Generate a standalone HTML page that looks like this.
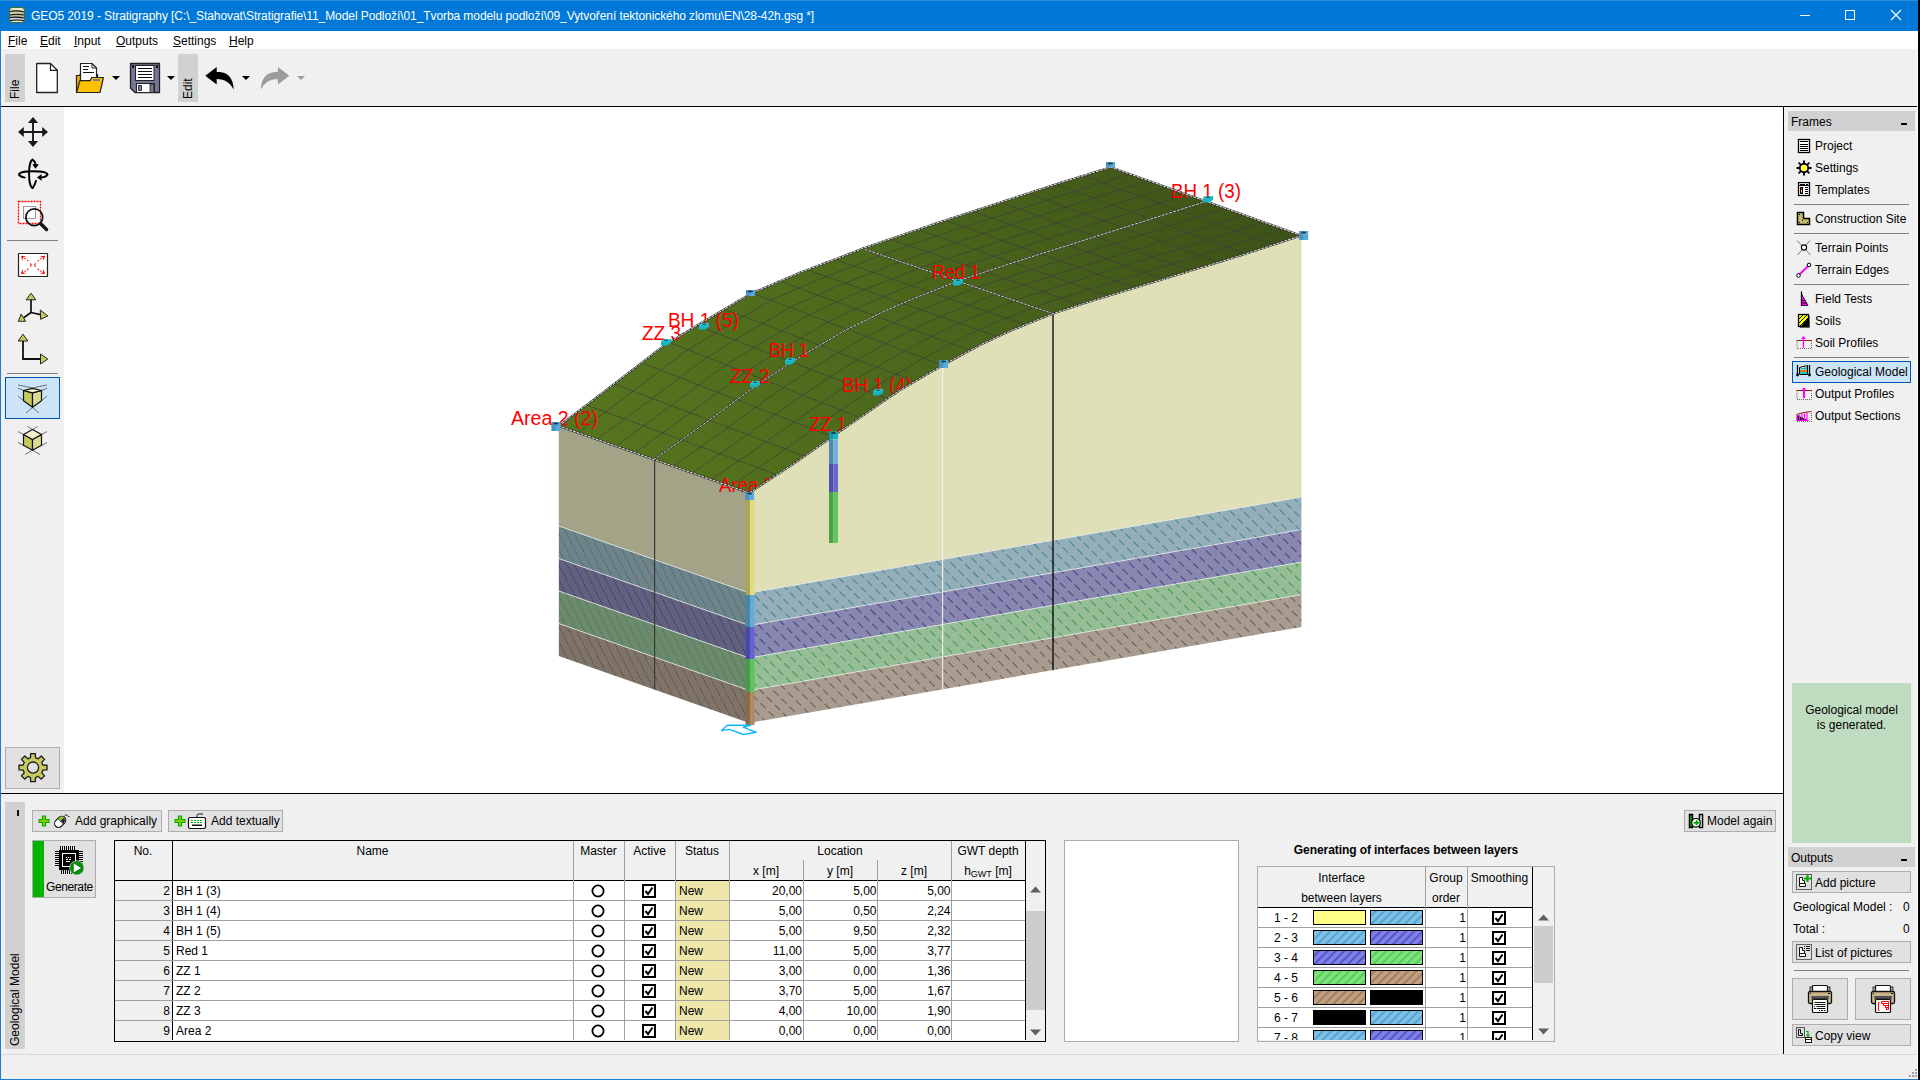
<!DOCTYPE html>
<html><head><meta charset="utf-8"><title>GEO5</title><style>
*{margin:0;padding:0}
html,body{width:1920px;height:1080px;overflow:hidden;background:#f0f0f0;position:relative}
body{font-family:"Liberation Sans",sans-serif;font-size:12px;color:#000}
.t{position:absolute;white-space:pre;line-height:15px;font-size:12px;margin-top:1px}
u{text-decoration:underline;text-underline-offset:1px}
</style></head>
<body>
<div style="position:absolute;left:0px;top:0px;width:1918px;height:31px;background:#0078d7"></div>
<div style="position:absolute;left:0px;top:0px;width:1918px;height:1px;background:#2b8ddd"></div>
<div style="position:absolute;left:1918px;top:0px;width:2px;height:1080px;background:#000"></div>
<div style="position:absolute;left:0px;top:31px;width:1px;height:1049px;background:#1a7fd4"></div>
<div style="position:absolute;left:0px;top:1079px;width:1918px;height:1px;background:#1a7fd4"></div>
<div style="position:absolute;left:9px;top:7px;width:16px;height:16px;"><svg width="16" height="16" viewBox="0 0 16 16"><defs><linearGradient id="tg" x1="0" y1="0" x2="0" y2="1"><stop offset="0" stop-color="#f0f0d8"/><stop offset=".45" stop-color="#c8c890"/><stop offset=".55" stop-color="#b0b0b0"/><stop offset="1" stop-color="#e8e8e8"/></linearGradient></defs><rect x=".5" y=".5" width="15" height="15" rx="3" fill="url(#tg)" stroke="#4a6a20"/><path d="M1 4.5 Q8 3 15 5 M1 8 Q8 6.5 15 8 M1 10.5 Q8 9.5 15 11 M1 13.5 Q8 12.5 15 13.5" stroke="#111" stroke-width="1.1" fill="none"/></svg></div>
<div class="t" style="left:31px;top:8px;color:#fff;letter-spacing:-0.08px">GEO5 2019 - Stratigraphy [C:\_Stahovat\Stratigrafie\11_Model Podloží\01_Tvorba modelu podloží\09_Vytvoření tektonického zlomu\EN\28-42h.gsg *]</div>
<div style="position:absolute;left:1800px;top:15px;width:10px;height:1px;background:#fff"></div>
<div style="position:absolute;left:1845px;top:10px;width:10px;height:10px;border:1px solid #fff;box-sizing:border-box"></div>
<div style="position:absolute;left:1890px;top:9px;width:12px;height:12px;"><svg width="12" height="12"><path d="M1 1L11 11M11 1L1 11" stroke="#fff" stroke-width="1.1"/></svg></div>
<div style="position:absolute;left:1px;top:31px;width:1917px;height:18px;background:#fff"></div>
<div class="t" style="left:8px;top:33px;color:#000"><u>F</u>ile</div>
<div class="t" style="left:40px;top:33px;color:#000"><u>E</u>dit</div>
<div class="t" style="left:74px;top:33px;color:#000"><u>I</u>nput</div>
<div class="t" style="left:116px;top:33px;color:#000"><u>O</u>utputs</div>
<div class="t" style="left:173px;top:33px;color:#000"><u>S</u>ettings</div>
<div class="t" style="left:229px;top:33px;color:#000"><u>H</u>elp</div>
<div style="position:absolute;left:1px;top:49px;width:1917px;height:57px;background:#f0f0f0"></div>
<div style="position:absolute;left:1px;top:106px;width:1917px;height:1px;background:#000"></div>
<div style="position:absolute;left:5px;top:54px;width:20px;height:48px;background:#d1d1d1"></div><div class="t" style="left:8px;top:98px;transform-origin:0 0;transform:rotate(-90deg);color:#000">File</div>
<div style="position:absolute;left:178px;top:54px;width:20px;height:48px;background:#d1d1d1"></div><div class="t" style="left:181px;top:98px;transform-origin:0 0;transform:rotate(-90deg);color:#000">Edit</div>
<svg style="position:absolute;left:30px;top:58px;" width="40" height="40" viewBox="0 0 40 40"><path d="M6.7 5.5H20.5L27.3 12.3V34.5H6.7Z" fill="#fff" stroke="#222" stroke-width="1.3" stroke-linejoin="round"/><path d="M20.5 5.5V12.3H27.3" fill="none" stroke="#222" stroke-width="1.2"/></svg>
<svg style="position:absolute;left:70px;top:58px;" width="40" height="40" viewBox="0 0 40 40"><path d="M6.5 17.5H10V16.5H27.5V34.5H6.5Z" fill="#f0ac00" stroke="#222" stroke-width="1.2"/><path d="M10.5 5.5H22L26.5 10V22.5H10.5Z" fill="#fff" stroke="#222" stroke-width="1.2" stroke-linejoin="round"/><path d="M22 5.5V10H26.5" fill="none" stroke="#222"/><path d="M13 8.5H19M13 11.5H18M13 14.5H24" stroke="#111" stroke-width="1.1"/><path d="M6.5 34.5L10 22.7H20.2L21.7 19.5H33.4L30 34.5Z" fill="#ffc000" stroke="#222" stroke-width="1.2" stroke-linejoin="round"/><rect x="23" y="21" width="7" height="2" fill="#7878a0"/></svg>
<svg style="position:absolute;left:112px;top:76px;" width="9" height="5" viewBox="0 0 9 5"><path d="M0 0H8L4 4Z" fill="#000"/></svg>
<svg style="position:absolute;left:128px;top:58px;" width="36" height="40" viewBox="0 0 36 40"><path d="M2.5 5.5H31.5V34.5H7L2.5 30Z" fill="#767696" stroke="#222" stroke-width="1.3" stroke-linejoin="round"/><rect x="7.5" y="7.5" width="18.5" height="15" fill="#fff" stroke="#222"/><path d="M10 10.5H24M10 13.5H24M10 16.5H24M10 19.5H24" stroke="#111" stroke-width="1.1"/><rect x="8.5" y="25.5" width="18" height="9" fill="#fff" stroke="#222"/><rect x="22" y="26" width="4" height="8.5" fill="#767696" stroke="#222" stroke-width=".8"/><rect x="10.5" y="27.5" width="3" height="5" fill="#767696" stroke="#222" stroke-width=".8"/><rect x="4" y="7" width="2" height="3" fill="#111"/><rect x="28" y="7" width="2" height="3" fill="#111"/></svg>
<svg style="position:absolute;left:167px;top:76px;" width="9" height="5" viewBox="0 0 9 5"><path d="M0 0H8L4 4Z" fill="#000"/></svg>
<svg style="position:absolute;left:198px;top:60px;" width="100" height="36" viewBox="0 0 100 36"><path d="M7.3 15.75L18.7 7V12C26 11.5 35 14 35.8 29.5C32 23 27 19 18.7 19V24.5Z" fill="#000"/><path d="M91.3 15.75L79.9 7V12C72.6 11.5 63.6 14 62.8 29.5C66.6 23 71.6 19 79.9 19V24.5Z" fill="#9c9c9c"/></svg>
<svg style="position:absolute;left:242px;top:76px;" width="9" height="5" viewBox="0 0 9 5"><path d="M0 0H8L4 4Z" fill="#000"/></svg>
<svg style="position:absolute;left:297px;top:76px;" width="9" height="5" viewBox="0 0 9 5"><path d="M0 0H8L4 4Z" fill="#9c9c9c"/></svg>
<div style="position:absolute;left:1px;top:107px;width:63px;height:686px;background:#f0f0f0"></div>
<svg style="position:absolute;left:14px;top:113px;" width="38" height="38" viewBox="0 0 38 38"><path d="M19 9V29M9 19H29" stroke="#1a1a1a" stroke-width="1.9"/><path d="M19 4L13.9 9.9H24.1Z M19 34L13.9 28.1H24.1Z M4 19L9.8 13.9V24.1Z M34 19L28.2 13.9V24.1Z" fill="#1a1a1a"/></svg>
<svg style="position:absolute;left:14px;top:155px;" width="38" height="38" viewBox="0 0 38 38"><g fill="none" stroke="#000" stroke-width="1.9" stroke-linecap="round"><path d="M18.5 4.6A3.8 14.3 0 0 0 18.5 33.1"/><path d="M18.5 4.6Q21 6 21.6 9.5"/><path d="M18.5 33.1Q21 30 22 25.8"/><path d="M5 19.5A14.2 3.3 0 0 1 33.4 19.5"/><path d="M33.4 19.5Q32 22.2 28 22.4"/><path d="M5 19.5Q6 21.8 10.8 22.6"/></g><path d="M18.2 9.3H24.9L21.5 13.8Z M23 22.4L27.6 19V25.8Z" fill="#000"/></svg>
<svg style="position:absolute;left:14px;top:197px;" width="38" height="38" viewBox="0 0 38 38"><rect x="4.5" y="4.5" width="22" height="22" fill="#fff" stroke="#f00" stroke-width="1.3" stroke-dasharray="2 1"/><rect x="9.5" y="9.5" width="12" height="12" fill="none" stroke="#999" stroke-width="1"/><circle cx="20.3" cy="20.2" r="8.4" fill="none" stroke="#111" stroke-width="1.7"/><path d="M26.5 26.5L32.5 32.5" stroke="#111" stroke-width="3.4" stroke-linecap="round"/></svg>
<div style="position:absolute;left:7px;top:240px;width:51px;height:1px;background:#808080"></div>
<svg style="position:absolute;left:14px;top:246px;" width="38" height="38" viewBox="0 0 38 38"><rect x="4.5" y="7.5" width="29" height="23" rx="0.6" fill="#fff" stroke="#222" stroke-width="1.2"/><path d="M7 9.8L12 10.2L9 11.6L8.4 14.8Z M31 9.8L26 10.2L29 11.6L29.6 14.8Z M7 28L12 27.6L9 26.2L8.4 23Z M31 28L26 27.6L29 26.2L29.6 23Z" fill="#f00"/><path d="M10.5 12.2L15.2 15.8M27.5 12.2L22.8 15.8M10.5 25.6L15.2 22.2M27.5 25.6L22.8 22.2" stroke="#f00" stroke-width="1.1" stroke-dasharray="1.6 1.6"/><path d="M16.4 17.4Q18 18.9 16.4 20.5M21.6 17.4Q20 18.9 21.6 20.5" fill="none" stroke="#f00" stroke-width="1.1"/></svg>
<svg style="position:absolute;left:14px;top:288px;" width="38" height="80" viewBox="0 0 38 80"><path d="M17 11V24.5L10 29.5M17 24.5L26.5 26.6" fill="none" stroke="#111" stroke-width="1.7"/><path d="M17 5.2L12.2 11.8H21.8Z M4.3 33.3H11.6L7.2 26Z M26.3 22L33.8 28L26.6 31.3Z" fill="#c8c860" stroke="#111" stroke-width=".9" stroke-linejoin="round"/><path d="M9 52V71H27" fill="none" stroke="#111" stroke-width="1.8"/><path d="M9 46.2L4.2 53H13.8Z M33.8 71L26.5 66V76Z" fill="#c8c860" stroke="#111" stroke-width=".9" stroke-linejoin="round"/></svg>
<div style="position:absolute;left:7px;top:373px;width:51px;height:1px;background:#808080"></div>
<div style="position:absolute;left:5px;top:377px;width:55px;height:42px;background:#cce4f7;border:1px solid #0055b0;box-sizing:border-box"></div>
<svg style="position:absolute;left:14px;top:380px;" width="38" height="76" viewBox="0 0 38 76"><g stroke="#606060" stroke-width=".9" fill="none"><path d="M4 5Q12 6.5 18.5 8Q25 6.5 33 5M4 8.3L9.5 10.3M33 8.3L27.5 10.3M4 16.2L9.5 20.5M33 16.2L27.5 20.5M12 33L18.5 27.5L25 33"/><path d="M13.5 46.5L18.5 49.5L23.5 46.5M4 51.5L9.5 54.5M33 51.5L27.5 54.5M4 62.5L9.5 65.5M33 62.5L27.5 65.5M11 74.5L18.5 70.2L26 74.5"/></g><g stroke="#111" stroke-width="1.2" stroke-linejoin="round"><path d="M9.5 10.5L18.5 12.8V27.3L9.5 20.8Z" fill="#c8c860"/><path d="M18.5 12.8L27.5 10.5V20.8L18.5 27.3Z" fill="#dcdc90"/><path d="M9.5 10.5L18.5 8.3L27.5 10.5L18.5 12.8Z" fill="#f2f2cc"/><path d="M9.5 54.5L18.5 59.5V70.2L9.5 65.2Z" fill="#c8c860"/><path d="M18.5 59.5L27.5 54.5V65.2L18.5 70.2Z" fill="#dcdc90"/><path d="M9.5 54.5L18.5 49.5L27.5 54.5L18.5 59.5Z" fill="#f2f2cc"/></g></svg>
<div style="position:absolute;left:5px;top:747px;width:55px;height:42px;background:#e1e1e1;border:1px solid #adadad;box-sizing:border-box"></div>
<svg style="position:absolute;left:18px;top:753px;" width="30" height="30" viewBox="0 0 30 30"><path d="M12.48 4.72 L12.67 0.59 L17.33 0.59 L17.52 4.72 L20.20 5.83 L23.26 3.05 L26.55 6.34 L23.77 9.40 L24.88 12.08 L29.01 12.27 L29.01 16.93 L24.88 17.12 L23.77 19.80 L26.55 22.86 L23.26 26.15 L20.20 23.37 L17.52 24.48 L17.33 28.61 L12.67 28.61 L12.48 24.48 L9.80 23.37 L6.74 26.15 L3.45 22.86 L6.23 19.80 L5.12 17.12 L0.99 16.93 L0.99 12.27 L5.12 12.08 L6.23 9.40 L3.45 6.34 L6.74 3.05 L9.80 5.83Z" fill="#c8c860" stroke="#1a1a1a" stroke-width="1.3" stroke-linejoin="round"/><circle cx="15" cy="14.6" r="5.6" fill="#e1e1e1" stroke="#1a1a1a" stroke-width="1.3"/></svg>
<div style="position:absolute;left:1px;top:793px;width:1782px;height:1px;background:#000"></div>
<div style="position:absolute;left:64px;top:107px;width:1719px;height:686px;background:#fff;overflow:hidden">
<svg width="1719" height="686" viewBox="64 107 1719 686" style="position:absolute;left:0;top:0" font-family="Liberation Sans, sans-serif">
<defs><linearGradient id="topg" gradientUnits="userSpaceOnUse" x1="600" y1="430" x2="1250" y2="190"><stop offset="0" stop-color="#56741e"/><stop offset="0.45" stop-color="#4c681c"/><stop offset="1" stop-color="#3e5318"/></linearGradient><pattern id="fhB" width="9" height="11.5" patternUnits="userSpaceOnUse" patternTransform="rotate(-45)"><rect width="9" height="11.5" fill="#94aeba"/><path d="M4.5 0V7.5" stroke="#2f7282" stroke-width="0.9" opacity="0.85"/></pattern><pattern id="lhB" width="7" height="2.5" patternUnits="userSpaceOnUse" patternTransform="rotate(-27)"><rect width="7" height="2.5" fill="#6f8489"/><rect x="3" y="0.75" width="1" height="1" fill="#1f5868" opacity="0.95"/></pattern><pattern id="fhP" width="9" height="11.5" patternUnits="userSpaceOnUse" patternTransform="rotate(-45)"><rect width="9" height="11.5" fill="#8787af"/><path d="M4.5 0V7.5" stroke="#2a2a7a" stroke-width="0.9" opacity="0.85"/></pattern><pattern id="lhP" width="7" height="2.5" patternUnits="userSpaceOnUse" patternTransform="rotate(-27)"><rect width="7" height="2.5" fill="#62627f"/><rect x="3" y="0.75" width="1" height="1" fill="#20206a" opacity="0.95"/></pattern><pattern id="fhG" width="9" height="11.5" patternUnits="userSpaceOnUse" patternTransform="rotate(-45)"><rect width="9" height="11.5" fill="#96be96"/><path d="M4.5 0V7.5" stroke="#2a8a3a" stroke-width="0.9" opacity="0.85"/></pattern><pattern id="lhG" width="7" height="2.5" patternUnits="userSpaceOnUse" patternTransform="rotate(-27)"><rect width="7" height="2.5" fill="#6d8a6f"/><rect x="3" y="0.75" width="1" height="1" fill="#1f7a2a" opacity="0.95"/></pattern><pattern id="fhR" width="9" height="11.5" patternUnits="userSpaceOnUse" patternTransform="rotate(-45)"><rect width="9" height="11.5" fill="#a89c90"/><path d="M4.5 0V7.5" stroke="#5a4630" stroke-width="0.9" opacity="0.85"/></pattern><pattern id="lhR" width="7" height="2.5" patternUnits="userSpaceOnUse" patternTransform="rotate(-27)"><rect width="7" height="2.5" fill="#7f746a"/><rect x="3" y="0.75" width="1" height="1" fill="#4a3620" opacity="0.95"/></pattern></defs>
<polygon points="749.4,493.0 752.2,491.2 754.9,489.3 757.7,487.5 760.4,485.7 763.2,483.9 766.0,482.0 768.7,480.2 771.5,478.4 774.2,476.5 777.0,474.7 779.8,472.9 782.5,471.1 785.3,469.2 788.0,467.4 790.8,465.6 793.6,463.7 796.3,461.9 799.1,460.1 801.8,458.2 804.6,456.2 807.4,454.3 810.1,452.4 812.9,450.4 815.6,448.5 818.4,446.5 821.2,444.6 823.9,442.6 826.7,440.7 829.4,438.7 832.2,436.8 835.0,434.8 837.7,432.9 840.5,431.0 843.2,429.1 846.0,427.2 848.8,425.3 851.5,423.4 854.3,421.5 857.0,419.6 859.8,417.7 862.6,415.8 865.3,413.9 868.1,412.0 870.8,410.1 873.6,408.2 876.4,406.3 879.1,404.4 881.9,402.5 884.6,400.6 887.4,398.6 890.2,396.7 892.9,394.9 895.7,393.1 898.4,391.3 901.2,389.5 904.0,387.9 906.7,386.3 909.5,384.7 912.2,383.1 915.0,381.5 917.8,379.9 920.5,378.2 923.3,376.6 926.0,375.0 928.8,373.4 931.6,371.8 934.3,370.2 937.1,368.6 939.8,367.0 942.6,365.3 945.4,363.8 948.1,362.3 950.9,360.8 953.6,359.3 956.4,357.8 959.2,356.3 961.9,354.8 964.7,353.3 967.4,351.9 970.2,350.4 973.0,348.9 975.7,347.4 978.5,345.9 981.2,344.4 984.0,343.1 986.8,341.9 989.5,340.6 992.3,339.3 995.0,338.0 997.8,336.7 1000.6,335.4 1003.3,334.1 1006.1,332.8 1008.8,331.6 1011.6,330.3 1014.4,329.2 1017.1,328.1 1019.9,327.0 1022.6,325.9 1025.4,324.8 1028.2,323.7 1030.9,322.6 1033.7,321.4 1036.4,320.3 1039.2,319.2 1042.0,318.1 1044.7,317.0 1047.5,315.9 1050.2,314.8 1053.0,313.7 1055.8,312.7 1058.5,311.8 1061.3,310.9 1064.0,310.0 1066.8,309.1 1069.6,308.2 1072.3,307.3 1075.1,306.4 1077.8,305.5 1080.6,304.6 1083.4,303.7 1086.1,302.8 1088.9,301.9 1091.6,301.1 1094.4,300.2 1097.2,299.4 1099.9,298.5 1102.7,297.7 1105.4,296.8 1108.2,296.0 1111.0,295.2 1113.7,294.3 1116.5,293.5 1119.2,292.6 1122.0,291.8 1124.8,290.9 1127.5,290.1 1130.3,289.3 1133.0,288.4 1135.8,287.6 1138.6,286.7 1141.3,285.9 1144.1,285.1 1146.8,284.2 1149.6,283.4 1152.4,282.5 1155.1,281.7 1157.9,280.8 1160.6,280.0 1163.4,279.2 1166.2,278.3 1168.9,277.5 1171.7,276.6 1174.4,275.8 1177.2,274.9 1180.0,274.1 1182.7,273.3 1185.5,272.4 1188.2,271.6 1191.0,270.7 1193.8,269.9 1196.5,269.0 1199.3,268.2 1202.0,267.4 1204.8,266.5 1207.6,265.7 1210.3,264.8 1213.1,264.0 1215.8,263.1 1218.6,262.3 1221.4,261.5 1224.1,260.6 1226.9,259.8 1229.6,258.9 1232.4,258.1 1235.2,257.2 1237.9,256.4 1240.7,255.5 1243.4,254.6 1246.2,253.7 1249.0,252.8 1251.7,251.9 1254.5,251.0 1257.2,250.1 1260.0,249.2 1262.8,248.3 1265.5,247.4 1268.3,246.5 1271.0,245.6 1273.8,244.7 1276.6,243.8 1279.3,242.8 1282.1,241.9 1284.8,241.0 1287.6,240.1 1290.4,239.2 1293.1,238.3 1295.9,237.4 1298.6,236.5 1301.4,235.6 1110.8,167.1 1108.0,167.9 1105.3,168.8 1102.5,169.7 1099.8,170.5 1097.0,171.4 1094.2,172.2 1091.5,173.1 1088.7,174.0 1086.0,174.8 1083.2,175.7 1080.4,176.5 1077.7,177.4 1074.9,178.2 1072.2,179.1 1069.4,180.0 1066.6,180.8 1063.9,181.7 1061.1,182.5 1058.4,183.4 1055.6,184.3 1052.8,185.2 1050.1,186.1 1047.3,187.0 1044.6,187.9 1041.8,188.8 1039.0,189.7 1036.3,190.6 1033.5,191.5 1030.8,192.4 1028.0,193.3 1025.2,194.2 1022.5,195.1 1019.7,196.0 1017.0,196.9 1014.2,197.8 1011.4,198.7 1008.7,199.6 1005.9,200.5 1003.2,201.4 1000.4,202.3 997.6,203.2 994.9,204.1 992.1,205.0 989.4,205.9 986.6,206.8 983.8,207.7 981.1,208.6 978.3,209.5 975.6,210.4 972.8,211.3 970.0,212.2 967.3,213.1 964.5,214.0 961.8,214.9 959.0,215.8 956.2,216.7 953.5,217.6 950.7,218.5 948.0,219.4 945.2,220.3 942.4,221.2 939.7,222.1 936.9,223.0 934.2,224.0 931.4,224.9 928.6,225.8 925.9,226.8 923.1,227.7 920.4,228.7 917.6,229.6 914.8,230.6 912.1,231.5 909.3,232.5 906.6,233.4 903.8,234.4 901.0,235.3 898.3,236.2 895.5,237.2 892.8,238.1 890.0,239.1 887.2,240.0 884.5,241.0 881.7,241.9 879.0,242.9 876.2,243.8 873.4,244.7 870.7,245.7 867.9,246.6 865.2,247.6 862.4,248.5 859.6,249.6 856.9,250.7 854.1,251.8 851.4,252.9 848.6,254.0 845.8,255.1 843.1,256.2 840.3,257.2 837.6,258.3 834.8,259.3 832.0,260.4 829.3,261.4 826.5,262.5 823.8,263.5 821.0,264.6 818.2,265.6 815.5,266.7 812.7,267.7 810.0,268.8 807.2,269.8 804.4,270.8 801.7,271.9 798.9,273.0 796.2,274.2 793.4,275.3 790.6,276.5 787.9,277.7 785.1,278.9 782.4,280.1 779.6,281.2 776.8,282.4 774.1,283.6 771.3,284.8 768.6,286.0 765.8,287.1 763.0,288.3 760.3,289.5 757.5,290.7 754.8,291.9 752.0,293.1 749.2,294.4 746.5,296.0 743.7,297.7 741.0,299.3 738.2,300.9 735.4,302.6 732.7,304.2 729.9,305.9 727.2,307.5 724.4,309.1 721.6,310.8 718.9,312.4 716.1,314.1 713.4,315.7 710.6,317.4 707.8,319.0 705.1,320.6 702.3,322.3 699.6,323.9 696.8,325.6 694.0,327.3 691.3,328.9 688.5,330.6 685.8,332.3 683.0,333.9 680.2,335.6 677.5,337.3 674.7,338.9 672.0,340.6 669.2,342.3 666.4,343.9 663.7,345.8 660.9,347.9 658.2,350.0 655.4,352.1 652.6,354.3 649.9,356.4 647.1,358.5 644.4,360.6 641.6,362.7 638.8,364.8 636.1,367.0 633.3,369.1 630.6,371.2 627.8,373.3 625.0,375.4 622.3,377.5 619.5,379.7 616.8,381.8 614.0,383.9 611.2,386.0 608.5,388.1 605.7,390.2 603.0,392.4 600.2,394.5 597.4,396.6 594.7,398.7 591.9,400.8 589.2,402.9 586.4,405.0 583.6,407.1 580.9,409.2 578.1,411.3 575.4,413.4 572.6,415.5 569.8,417.6 567.1,419.7 564.3,421.8 561.6,423.9 558.8,426.0" fill="url(#topg)"/>
<path d="M777.0 474.7 L772.2 473.0 L767.5 471.2 L762.7 469.5 L757.9 467.7 L753.2 466.0 L748.4 464.3 L743.6 462.5 L738.9 460.8 L734.1 459.0 L729.4 457.3 L724.6 455.5 L719.8 453.8 L715.1 452.1 L710.3 450.3 L705.5 448.6 L700.8 446.8 L696.0 445.1 L691.2 443.3 L686.5 441.6 L681.7 439.8 L676.9 438.1 L672.2 436.4 L667.4 434.6 L662.6 432.9 L657.9 431.1 L653.1 429.4 L648.3 427.6 L643.6 425.9 L638.8 424.2 L634.0 422.4 L629.3 420.7 L624.5 418.9 L619.8 417.2 L615.0 415.4 L610.2 413.7 L605.5 412.0 L600.7 410.2 L595.9 408.5 L591.2 406.7 L586.4 405.0 M804.6 456.2 L799.8 454.4 L795.1 452.6 L790.3 450.8 L785.5 449.0 L780.8 447.2 L776.0 445.4 L771.2 443.6 L766.5 441.8 L761.7 440.0 L757.0 438.2 L752.2 436.4 L747.4 434.5 L742.7 432.7 L737.9 430.9 L733.1 429.1 L728.4 427.3 L723.6 425.5 L718.8 423.7 L714.1 421.9 L709.3 420.1 L704.5 418.3 L699.8 416.5 L695.0 414.6 L690.2 412.8 L685.5 411.0 L680.7 409.2 L675.9 407.4 L671.2 405.6 L666.4 403.8 L661.7 402.0 L656.9 400.2 L652.1 398.4 L647.4 396.6 L642.6 394.7 L637.8 392.9 L633.1 391.1 L628.3 389.3 L623.5 387.5 L618.8 385.7 L614.0 383.9 M832.2 436.8 L827.4 434.9 L822.7 433.1 L817.9 431.2 L813.1 429.4 L808.4 427.5 L803.6 425.7 L798.8 423.8 L794.1 422.0 L789.3 420.1 L784.6 418.3 L779.8 416.4 L775.0 414.6 L770.3 412.7 L765.5 410.9 L760.7 409.0 L756.0 407.2 L751.2 405.3 L746.4 403.4 L741.7 401.6 L736.9 399.7 L732.1 397.9 L727.4 396.0 L722.6 394.2 L717.8 392.3 L713.1 390.5 L708.3 388.6 L703.5 386.8 L698.8 384.9 L694.0 383.1 L689.2 381.2 L684.5 379.4 L679.7 377.5 L675.0 375.7 L670.2 373.8 L665.4 372.0 L660.7 370.1 L655.9 368.3 L651.1 366.4 L646.4 364.6 L641.6 362.7 M859.8 417.7 L855.0 415.8 L850.3 413.9 L845.5 412.0 L840.7 410.2 L836.0 408.3 L831.2 406.4 L826.4 404.5 L821.7 402.6 L816.9 400.7 L812.1 398.8 L807.4 397.0 L802.6 395.1 L797.9 393.2 L793.1 391.3 L788.3 389.4 L783.6 387.5 L778.8 385.6 L774.0 383.8 L769.3 381.9 L764.5 380.0 L759.7 378.1 L755.0 376.2 L750.2 374.3 L745.4 372.4 L740.7 370.6 L735.9 368.7 L731.1 366.8 L726.4 364.9 L721.6 363.0 L716.8 361.1 L712.1 359.2 L707.3 357.4 L702.6 355.5 L697.8 353.6 L693.0 351.7 L688.3 349.8 L683.5 347.9 L678.7 346.0 L674.0 344.2 L669.2 342.3 M887.4 398.6 L882.6 396.8 L877.9 395.0 L873.1 393.2 L868.3 391.3 L863.6 389.5 L858.8 387.7 L854.0 385.9 L849.3 384.0 L844.5 382.2 L839.8 380.4 L835.0 378.6 L830.2 376.7 L825.5 374.9 L820.7 373.1 L815.9 371.3 L811.2 369.4 L806.4 367.6 L801.6 365.8 L796.9 363.9 L792.1 362.1 L787.3 360.3 L782.6 358.5 L777.8 356.6 L773.0 354.8 L768.3 353.0 L763.5 351.2 L758.7 349.3 L754.0 347.5 L749.2 345.7 L744.5 343.9 L739.7 342.0 L734.9 340.2 L730.2 338.4 L725.4 336.6 L720.6 334.7 L715.9 332.9 L711.1 331.1 L706.3 329.2 L701.6 327.4 L696.8 325.6 M915.0 381.5 L910.2 379.7 L905.5 377.9 L900.7 376.0 L895.9 374.2 L891.2 372.4 L886.4 370.6 L881.6 368.8 L876.9 367.0 L872.1 365.2 L867.4 363.4 L862.6 361.6 L857.8 359.8 L853.1 358.0 L848.3 356.2 L843.5 354.4 L838.8 352.5 L834.0 350.7 L829.2 348.9 L824.5 347.1 L819.7 345.3 L814.9 343.5 L810.2 341.7 L805.4 339.9 L800.6 338.1 L795.9 336.3 L791.1 334.5 L786.3 332.7 L781.6 330.8 L776.8 329.0 L772.0 327.2 L767.3 325.4 L762.5 323.6 L757.8 321.8 L753.0 320.0 L748.2 318.2 L743.5 316.4 L738.7 314.6 L733.9 312.8 L729.2 311.0 L724.4 309.1 M942.6 365.3 L937.8 363.5 L933.1 361.7 L928.3 359.9 L923.5 358.1 L918.8 356.3 L914.0 354.5 L909.2 352.7 L904.5 350.9 L899.7 349.1 L895.0 347.3 L890.2 345.5 L885.4 343.7 L880.7 341.8 L875.9 340.0 L871.1 338.2 L866.4 336.4 L861.6 334.6 L856.8 332.8 L852.1 331.0 L847.3 329.2 L842.5 327.4 L837.8 325.6 L833.0 323.8 L828.2 322.0 L823.5 320.2 L818.7 318.4 L813.9 316.5 L809.2 314.7 L804.4 312.9 L799.7 311.1 L794.9 309.3 L790.1 307.5 L785.4 305.7 L780.6 303.9 L775.8 302.1 L771.1 300.3 L766.3 298.5 L761.5 296.7 L756.8 294.9 L752.0 293.1 M970.2 350.4 L965.4 348.6 L960.7 346.9 L955.9 345.2 L951.1 343.4 L946.4 341.7 L941.6 340.0 L936.8 338.3 L932.1 336.5 L927.3 334.8 L922.6 333.1 L917.8 331.3 L913.0 329.6 L908.3 327.9 L903.5 326.2 L898.7 324.4 L894.0 322.7 L889.2 321.0 L884.4 319.3 L879.7 317.5 L874.9 315.8 L870.1 314.1 L865.4 312.3 L860.6 310.6 L855.8 308.9 L851.1 307.2 L846.3 305.4 L841.5 303.7 L836.8 302.0 L832.0 300.2 L827.2 298.5 L822.5 296.8 L817.7 295.1 L813.0 293.3 L808.2 291.6 L803.4 289.9 L798.7 288.2 L793.9 286.4 L789.1 284.7 L784.4 283.0 L779.6 281.2 M997.8 336.7 L993.0 335.0 L988.3 333.4 L983.5 331.7 L978.7 330.0 L974.0 328.3 L969.2 326.7 L964.4 325.0 L959.7 323.3 L954.9 321.7 L950.1 320.0 L945.4 318.3 L940.6 316.6 L935.9 315.0 L931.1 313.3 L926.3 311.6 L921.6 309.9 L916.8 308.3 L912.0 306.6 L907.3 304.9 L902.5 303.3 L897.7 301.6 L893.0 299.9 L888.2 298.2 L883.4 296.6 L878.7 294.9 L873.9 293.2 L869.1 291.5 L864.4 289.9 L859.6 288.2 L854.8 286.5 L850.1 284.9 L845.3 283.2 L840.6 281.5 L835.8 279.8 L831.0 278.2 L826.3 276.5 L821.5 274.8 L816.7 273.1 L812.0 271.5 L807.2 269.8 M1025.4 324.8 L1020.6 323.1 L1015.9 321.5 L1011.1 319.9 L1006.3 318.2 L1001.6 316.6 L996.8 315.0 L992.0 313.3 L987.3 311.7 L982.5 310.1 L977.8 308.4 L973.0 306.8 L968.2 305.2 L963.5 303.5 L958.7 301.9 L953.9 300.2 L949.2 298.6 L944.4 297.0 L939.6 295.3 L934.9 293.7 L930.1 292.1 L925.3 290.4 L920.6 288.8 L915.8 287.2 L911.0 285.5 L906.3 283.9 L901.5 282.3 L896.7 280.6 L892.0 279.0 L887.2 277.3 L882.5 275.7 L877.7 274.1 L872.9 272.4 L868.2 270.8 L863.4 269.2 L858.6 267.5 L853.9 265.9 L849.1 264.3 L844.3 262.6 L839.6 261.0 L834.8 259.3 M1080.6 304.6 L1075.8 303.0 L1071.1 301.3 L1066.3 299.7 L1061.5 298.1 L1056.8 296.4 L1052.0 294.8 L1047.2 293.1 L1042.5 291.5 L1037.7 289.9 L1032.9 288.2 L1028.2 286.6 L1023.4 285.0 L1018.7 283.3 L1013.9 281.7 L1009.1 280.0 L1004.4 278.4 L999.6 276.8 L994.8 275.1 L990.1 273.5 L985.3 271.8 L980.5 270.2 L975.8 268.6 L971.0 266.9 L966.2 265.3 L961.5 263.7 L956.7 262.0 L951.9 260.4 L947.2 258.7 L942.4 257.1 L937.6 255.5 L932.9 253.8 L928.1 252.2 L923.4 250.5 L918.6 248.9 L913.8 247.3 L909.1 245.6 L904.3 244.0 L899.5 242.4 L894.8 240.7 L890.0 239.1 M1108.2 296.0 L1103.4 294.3 L1098.7 292.7 L1093.9 291.0 L1089.1 289.4 L1084.4 287.7 L1079.6 286.0 L1074.8 284.4 L1070.1 282.7 L1065.3 281.1 L1060.5 279.4 L1055.8 277.8 L1051.0 276.1 L1046.3 274.4 L1041.5 272.8 L1036.7 271.1 L1032.0 269.5 L1027.2 267.8 L1022.4 266.1 L1017.7 264.5 L1012.9 262.8 L1008.1 261.2 L1003.4 259.5 L998.6 257.8 L993.8 256.2 L989.1 254.5 L984.3 252.9 L979.5 251.2 L974.8 249.5 L970.0 247.9 L965.2 246.2 L960.5 244.6 L955.7 242.9 L951.0 241.2 L946.2 239.6 L941.4 237.9 L936.7 236.3 L931.9 234.6 L927.1 232.9 L922.4 231.3 L917.6 229.6 M1135.8 287.6 L1131.0 285.9 L1126.3 284.2 L1121.5 282.5 L1116.7 280.8 L1112.0 279.2 L1107.2 277.5 L1102.4 275.8 L1097.7 274.1 L1092.9 272.4 L1088.1 270.8 L1083.4 269.1 L1078.6 267.4 L1073.9 265.7 L1069.1 264.0 L1064.3 262.3 L1059.6 260.7 L1054.8 259.0 L1050.0 257.3 L1045.3 255.6 L1040.5 253.9 L1035.7 252.2 L1031.0 250.6 L1026.2 248.9 L1021.4 247.2 L1016.7 245.5 L1011.9 243.8 L1007.1 242.1 L1002.4 240.5 L997.6 238.8 L992.8 237.1 L988.1 235.4 L983.3 233.7 L978.6 232.1 L973.8 230.4 L969.0 228.7 L964.3 227.0 L959.5 225.3 L954.7 223.6 L950.0 222.0 L945.2 220.3 M1163.4 279.2 L1158.6 277.5 L1153.9 275.8 L1149.1 274.1 L1144.3 272.4 L1139.6 270.7 L1134.8 269.0 L1130.0 267.3 L1125.3 265.6 L1120.5 263.9 L1115.8 262.2 L1111.0 260.5 L1106.2 258.8 L1101.5 257.1 L1096.7 255.4 L1091.9 253.7 L1087.2 252.0 L1082.4 250.3 L1077.6 248.6 L1072.9 246.9 L1068.1 245.2 L1063.3 243.5 L1058.6 241.8 L1053.8 240.1 L1049.0 238.4 L1044.3 236.7 L1039.5 235.0 L1034.7 233.3 L1030.0 231.6 L1025.2 229.9 L1020.5 228.3 L1015.7 226.6 L1010.9 224.9 L1006.2 223.2 L1001.4 221.5 L996.6 219.8 L991.9 218.1 L987.1 216.4 L982.3 214.7 L977.6 213.0 L972.8 211.3 M1191.0 270.7 L1186.2 269.0 L1181.5 267.3 L1176.7 265.6 L1171.9 263.9 L1167.2 262.2 L1162.4 260.5 L1157.6 258.7 L1152.9 257.0 L1148.1 255.3 L1143.3 253.6 L1138.6 251.9 L1133.8 250.2 L1129.1 248.5 L1124.3 246.8 L1119.5 245.1 L1114.8 243.4 L1110.0 241.6 L1105.2 239.9 L1100.5 238.2 L1095.7 236.5 L1090.9 234.8 L1086.2 233.1 L1081.4 231.4 L1076.6 229.7 L1071.9 228.0 L1067.1 226.2 L1062.3 224.5 L1057.6 222.8 L1052.8 221.1 L1048.0 219.4 L1043.3 217.7 L1038.5 216.0 L1033.8 214.3 L1029.0 212.6 L1024.2 210.8 L1019.5 209.1 L1014.7 207.4 L1009.9 205.7 L1005.2 204.0 L1000.4 202.3 M1218.6 262.3 L1213.8 260.6 L1209.1 258.8 L1204.3 257.1 L1199.5 255.4 L1194.8 253.7 L1190.0 251.9 L1185.2 250.2 L1180.5 248.5 L1175.7 246.8 L1170.9 245.0 L1166.2 243.3 L1161.4 241.6 L1156.7 239.9 L1151.9 238.1 L1147.1 236.4 L1142.4 234.7 L1137.6 233.0 L1132.8 231.3 L1128.1 229.5 L1123.3 227.8 L1118.5 226.1 L1113.8 224.4 L1109.0 222.6 L1104.2 220.9 L1099.5 219.2 L1094.7 217.5 L1089.9 215.7 L1085.2 214.0 L1080.4 212.3 L1075.6 210.6 L1070.9 208.8 L1066.1 207.1 L1061.4 205.4 L1056.6 203.7 L1051.8 201.9 L1047.1 200.2 L1042.3 198.5 L1037.5 196.8 L1032.8 195.0 L1028.0 193.3 M1246.2 253.7 L1241.4 252.0 L1236.7 250.3 L1231.9 248.5 L1227.1 246.8 L1222.4 245.1 L1217.6 243.3 L1212.8 241.6 L1208.1 239.8 L1203.3 238.1 L1198.5 236.4 L1193.8 234.6 L1189.0 232.9 L1184.3 231.2 L1179.5 229.4 L1174.7 227.7 L1170.0 226.0 L1165.2 224.2 L1160.4 222.5 L1155.7 220.8 L1150.9 219.0 L1146.1 217.3 L1141.4 215.6 L1136.6 213.8 L1131.8 212.1 L1127.1 210.4 L1122.3 208.6 L1117.5 206.9 L1112.8 205.1 L1108.0 203.4 L1103.2 201.7 L1098.5 199.9 L1093.7 198.2 L1089.0 196.5 L1084.2 194.7 L1079.4 193.0 L1074.7 191.3 L1069.9 189.5 L1065.1 187.8 L1060.4 186.1 L1055.6 184.3 M1273.8 244.7 L1269.0 242.9 L1264.3 241.2 L1259.5 239.5 L1254.7 237.8 L1250.0 236.0 L1245.2 234.3 L1240.4 232.6 L1235.7 230.9 L1230.9 229.1 L1226.1 227.4 L1221.4 225.7 L1216.6 224.0 L1211.9 222.2 L1207.1 220.5 L1202.3 218.8 L1197.6 217.1 L1192.8 215.3 L1188.0 213.6 L1183.3 211.9 L1178.5 210.2 L1173.7 208.4 L1169.0 206.7 L1164.2 205.0 L1159.4 203.3 L1154.7 201.5 L1149.9 199.8 L1145.1 198.1 L1140.4 196.4 L1135.6 194.6 L1130.8 192.9 L1126.1 191.2 L1121.3 189.5 L1116.6 187.7 L1111.8 186.0 L1107.0 184.3 L1102.3 182.6 L1097.5 180.8 L1092.7 179.1 L1088.0 177.4 L1083.2 175.7 M730.3 486.3 L735.9 482.6 L741.4 478.9 L746.9 475.2 L752.4 471.5 L757.9 467.7 L763.5 464.0 L769.0 460.3 L774.5 456.6 L780.0 452.9 L785.5 449.0 L791.1 445.1 L796.6 441.2 L802.1 437.2 L807.6 433.3 L813.1 429.4 L818.7 425.5 L824.2 421.6 L829.7 417.8 L835.2 413.9 L840.7 410.2 L846.3 406.4 L851.8 402.6 L857.3 398.9 L862.8 395.1 L868.3 391.3 L873.9 387.7 L879.4 384.1 L884.9 380.7 L890.4 377.5 L895.9 374.2 L901.5 371.0 L907.0 367.8 L912.5 364.5 L918.0 361.3 L923.5 358.1 L929.1 355.2 L934.6 352.2 L940.1 349.3 L945.6 346.4 L951.1 343.4 L956.7 340.5 L962.2 337.6 L967.7 335.1 L973.2 332.5 L978.7 330.0 L984.3 327.5 L989.8 325.0 L995.3 322.7 L1000.8 320.5 L1006.3 318.2 L1011.9 316.0 L1017.4 313.8 L1022.9 311.6 L1028.4 309.4 L1033.9 307.2 L1039.5 305.3 L1045.0 303.5 L1050.5 301.7 L1056.0 299.9 L1061.5 298.1 L1067.1 296.3 L1072.6 294.5 L1078.1 292.8 L1083.6 291.1 L1089.1 289.4 L1094.7 287.7 L1100.2 286.0 L1105.7 284.3 L1111.2 282.5 L1116.7 280.8 L1122.3 279.2 L1127.8 277.5 L1133.3 275.8 L1138.8 274.1 L1144.3 272.4 L1149.9 270.7 L1155.4 269.0 L1160.9 267.3 L1166.4 265.6 L1171.9 263.9 L1177.5 262.2 L1183.0 260.5 L1188.5 258.8 L1194.0 257.1 L1199.5 255.4 L1205.1 253.7 L1210.6 252.0 L1216.1 250.3 L1221.6 248.6 L1227.1 246.8 L1232.7 245.0 L1238.2 243.2 L1243.7 241.4 L1249.2 239.6 L1254.7 237.8 L1260.3 236.0 L1265.8 234.2 L1271.3 232.4 L1276.8 230.5 L1282.3 228.7 M711.3 479.6 L716.8 475.8 L722.3 472.1 L727.8 468.3 L733.4 464.5 L738.9 460.8 L744.4 457.0 L749.9 453.2 L755.4 449.5 L761.0 445.7 L766.5 441.8 L772.0 437.8 L777.5 433.9 L783.0 429.9 L788.6 425.9 L794.1 422.0 L799.6 418.1 L805.1 414.2 L810.6 410.3 L816.2 406.4 L821.7 402.6 L827.2 398.9 L832.7 395.2 L838.2 391.5 L843.8 387.8 L849.3 384.0 L854.8 380.4 L860.3 376.8 L865.8 373.5 L871.4 370.2 L876.9 367.0 L882.4 363.8 L887.9 360.5 L893.4 357.3 L899.0 354.1 L904.5 350.9 L910.0 348.0 L915.5 345.1 L921.0 342.3 L926.6 339.4 L932.1 336.5 L937.6 333.7 L943.1 330.9 L948.6 328.3 L954.2 325.8 L959.7 323.3 L965.2 320.8 L970.7 318.4 L976.2 316.1 L981.8 313.9 L987.3 311.7 L992.8 309.5 L998.3 307.3 L1003.8 305.1 L1009.4 302.8 L1014.9 300.6 L1020.4 298.7 L1025.9 296.9 L1031.4 295.1 L1037.0 293.3 L1042.5 291.5 L1048.0 289.7 L1053.5 287.9 L1059.0 286.2 L1064.6 284.5 L1070.1 282.7 L1075.6 281.0 L1081.1 279.3 L1086.6 277.6 L1092.2 275.8 L1097.7 274.1 L1103.2 272.4 L1108.7 270.7 L1114.2 269.0 L1119.8 267.3 L1125.3 265.6 L1130.8 263.9 L1136.3 262.2 L1141.8 260.5 L1147.4 258.7 L1152.9 257.0 L1158.4 255.3 L1163.9 253.6 L1169.4 251.9 L1175.0 250.2 L1180.5 248.5 L1186.0 246.8 L1191.5 245.1 L1197.0 243.4 L1202.6 241.7 L1208.1 239.8 L1213.6 238.0 L1219.1 236.2 L1224.6 234.5 L1230.2 232.7 L1235.7 230.9 L1241.2 229.1 L1246.7 227.3 L1252.2 225.5 L1257.8 223.7 L1263.3 221.9 M692.2 472.9 L697.7 469.1 L703.3 465.3 L708.8 461.4 L714.3 457.6 L719.8 453.8 L725.3 450.0 L730.9 446.2 L736.4 442.3 L741.9 438.5 L747.4 434.5 L752.9 430.5 L758.5 426.5 L764.0 422.5 L769.5 418.6 L775.0 414.6 L780.5 410.6 L786.1 406.7 L791.6 402.7 L797.1 398.8 L802.6 395.1 L808.1 391.4 L813.7 387.7 L819.2 384.1 L824.7 380.4 L830.2 376.7 L835.7 373.1 L841.3 369.6 L846.8 366.3 L852.3 363.0 L857.8 359.8 L863.3 356.5 L868.9 353.3 L874.4 350.0 L879.9 346.8 L885.4 343.7 L890.9 340.8 L896.5 338.0 L902.0 335.2 L907.5 332.4 L913.0 329.6 L918.5 326.8 L924.1 324.1 L929.6 321.5 L935.1 319.1 L940.6 316.6 L946.1 314.2 L951.7 311.8 L957.2 309.5 L962.7 307.3 L968.2 305.2 L973.7 303.0 L979.3 300.8 L984.8 298.5 L990.3 296.3 L995.8 294.1 L1001.3 292.2 L1006.9 290.4 L1012.4 288.6 L1017.9 286.8 L1023.4 285.0 L1028.9 283.1 L1034.5 281.3 L1040.0 279.6 L1045.5 277.8 L1051.0 276.1 L1056.5 274.3 L1062.1 272.6 L1067.6 270.9 L1073.1 269.1 L1078.6 267.4 L1084.1 265.7 L1089.7 263.9 L1095.2 262.2 L1100.7 260.5 L1106.2 258.8 L1111.7 257.1 L1117.3 255.4 L1122.8 253.6 L1128.3 251.9 L1133.8 250.2 L1139.3 248.5 L1144.9 246.8 L1150.4 245.0 L1155.9 243.3 L1161.4 241.6 L1166.9 239.9 L1172.5 238.2 L1178.0 236.4 L1183.5 234.7 L1189.0 232.9 L1194.5 231.1 L1200.1 229.3 L1205.6 227.5 L1211.1 225.8 L1216.6 224.0 L1222.1 222.2 L1227.7 220.4 L1233.2 218.6 L1238.7 216.8 L1244.2 215.0 M673.2 466.2 L678.7 462.3 L684.2 458.4 L689.7 454.6 L695.2 450.7 L700.8 446.8 L706.3 442.9 L711.8 439.1 L717.3 435.2 L722.8 431.3 L728.4 427.3 L733.9 423.3 L739.4 419.2 L744.9 415.2 L750.4 411.2 L756.0 407.2 L761.5 403.2 L767.0 399.2 L772.5 395.2 L778.0 391.2 L783.6 387.5 L789.1 383.9 L794.6 380.3 L800.1 376.7 L805.6 373.0 L811.2 369.4 L816.7 365.9 L822.2 362.4 L827.7 359.0 L833.2 355.8 L838.8 352.5 L844.3 349.3 L849.8 346.0 L855.3 342.8 L860.8 339.5 L866.4 336.4 L871.9 333.7 L877.4 330.9 L882.9 328.2 L888.4 325.4 L894.0 322.7 L899.5 320.0 L905.0 317.3 L910.5 314.8 L916.0 312.3 L921.6 309.9 L927.1 307.6 L932.6 305.2 L938.1 302.9 L943.6 300.8 L949.2 298.6 L954.7 296.4 L960.2 294.2 L965.7 292.0 L971.2 289.8 L976.8 287.6 L982.3 285.7 L987.8 283.9 L993.3 282.1 L998.8 280.2 L1004.4 278.4 L1009.9 276.6 L1015.4 274.8 L1020.9 273.0 L1026.4 271.2 L1032.0 269.5 L1037.5 267.7 L1043.0 265.9 L1048.5 264.2 L1054.0 262.4 L1059.6 260.7 L1065.1 258.9 L1070.6 257.2 L1076.1 255.5 L1081.6 253.7 L1087.2 252.0 L1092.7 250.3 L1098.2 248.5 L1103.7 246.8 L1109.2 245.1 L1114.8 243.4 L1120.3 241.6 L1125.8 239.9 L1131.3 238.2 L1136.8 236.4 L1142.4 234.7 L1147.9 233.0 L1153.4 231.2 L1158.9 229.5 L1164.4 227.8 L1170.0 226.0 L1175.5 224.2 L1181.0 222.4 L1186.5 220.6 L1192.0 218.8 L1197.6 217.1 L1203.1 215.3 L1208.6 213.5 L1214.1 211.7 L1219.6 210.0 L1225.2 208.2 M635.0 452.8 L640.6 448.8 L646.1 444.8 L651.6 440.8 L657.1 436.9 L662.6 432.9 L668.2 428.9 L673.7 424.9 L679.2 420.9 L684.7 416.9 L690.2 412.8 L695.8 408.7 L701.3 404.6 L706.8 400.5 L712.3 396.4 L717.8 392.3 L723.4 388.3 L728.9 384.2 L734.4 380.1 L739.9 376.1 L745.4 372.4 L751.0 368.9 L756.5 365.4 L762.0 361.9 L767.5 358.3 L773.0 354.8 L778.6 351.3 L784.1 347.9 L789.6 344.6 L795.1 341.3 L800.6 338.1 L806.2 334.8 L811.7 331.6 L817.2 328.3 L822.7 325.0 L828.2 322.0 L833.8 319.3 L839.3 316.7 L844.8 314.1 L850.3 311.5 L855.8 308.9 L861.4 306.3 L866.9 303.7 L872.4 301.2 L877.9 298.8 L883.4 296.6 L889.0 294.3 L894.5 292.0 L900.0 289.8 L905.5 287.7 L911.0 285.5 L916.6 283.4 L922.1 281.2 L927.6 279.0 L933.1 276.8 L938.6 274.6 L944.2 272.7 L949.7 270.8 L955.2 269.0 L960.7 267.1 L966.2 265.3 L971.8 263.4 L977.3 261.6 L982.8 259.8 L988.3 258.0 L993.8 256.2 L999.4 254.4 L1004.9 252.6 L1010.4 250.8 L1015.9 248.9 L1021.4 247.2 L1027.0 245.4 L1032.5 243.7 L1038.0 241.9 L1043.5 240.2 L1049.0 238.4 L1054.6 236.7 L1060.1 234.9 L1065.6 233.2 L1071.1 231.4 L1076.6 229.7 L1082.2 227.9 L1087.7 226.2 L1093.2 224.4 L1098.7 222.7 L1104.2 220.9 L1109.8 219.2 L1115.3 217.4 L1120.8 215.6 L1126.3 213.9 L1131.8 212.1 L1137.4 210.3 L1142.9 208.5 L1148.4 206.8 L1153.9 205.0 L1159.4 203.3 L1165.0 201.5 L1170.5 199.8 L1176.0 198.0 L1181.5 196.2 L1187.0 194.5 M616.0 446.1 L621.5 442.1 L627.0 438.0 L632.5 434.0 L638.1 429.9 L643.6 425.9 L649.1 421.9 L654.6 417.8 L660.1 413.8 L665.7 409.7 L671.2 405.6 L676.7 401.5 L682.2 397.3 L687.7 393.2 L693.3 389.1 L698.8 384.9 L704.3 380.8 L709.8 376.7 L715.3 372.6 L720.9 368.5 L726.4 364.9 L731.9 361.4 L737.4 357.9 L742.9 354.5 L748.5 351.0 L754.0 347.5 L759.5 344.1 L765.0 340.7 L770.5 337.4 L776.1 334.1 L781.6 330.8 L787.1 327.6 L792.6 324.3 L798.1 321.0 L803.7 317.8 L809.2 314.7 L814.7 312.2 L820.2 309.6 L825.7 307.1 L831.3 304.5 L836.8 302.0 L842.3 299.4 L847.8 296.9 L853.3 294.5 L858.9 292.1 L864.4 289.9 L869.9 287.6 L875.4 285.4 L880.9 283.2 L886.5 281.1 L892.0 279.0 L897.5 276.8 L903.0 274.6 L908.5 272.4 L914.1 270.2 L919.6 268.1 L925.1 266.2 L930.6 264.3 L936.1 262.5 L941.7 260.6 L947.2 258.7 L952.7 256.9 L958.2 255.0 L963.7 253.2 L969.3 251.4 L974.8 249.5 L980.3 247.7 L985.8 245.9 L991.3 244.1 L996.9 242.2 L1002.4 240.5 L1007.9 238.7 L1013.4 236.9 L1018.9 235.2 L1024.5 233.4 L1030.0 231.6 L1035.5 229.9 L1041.0 228.1 L1046.5 226.4 L1052.1 224.6 L1057.6 222.8 L1063.1 221.1 L1068.6 219.3 L1074.1 217.5 L1079.7 215.8 L1085.2 214.0 L1090.7 212.2 L1096.2 210.5 L1101.7 208.7 L1107.3 206.9 L1112.8 205.1 L1118.3 203.4 L1123.8 201.6 L1129.3 199.9 L1134.9 198.1 L1140.4 196.4 L1145.9 194.6 L1151.4 192.9 L1156.9 191.1 L1162.5 189.4 L1168.0 187.6 M596.9 439.4 L602.4 435.3 L608.0 431.2 L613.5 427.1 L619.0 423.0 L624.5 418.9 L630.0 414.8 L635.6 410.7 L641.1 406.6 L646.6 402.5 L652.1 398.4 L657.6 394.2 L663.2 390.0 L668.7 385.9 L674.2 381.7 L679.7 377.5 L685.2 373.4 L690.8 369.2 L696.3 365.1 L701.8 360.9 L707.3 357.4 L712.8 353.9 L718.4 350.5 L723.9 347.1 L729.4 343.6 L734.9 340.2 L740.4 336.8 L746.0 333.5 L751.5 330.2 L757.0 326.9 L762.5 323.6 L768.0 320.3 L773.6 317.1 L779.1 313.8 L784.6 310.5 L790.1 307.5 L795.6 305.0 L801.2 302.5 L806.7 300.0 L812.2 297.6 L817.7 295.1 L823.2 292.6 L828.8 290.1 L834.3 287.7 L839.8 285.4 L845.3 283.2 L850.8 281.0 L856.4 278.8 L861.9 276.7 L867.4 274.6 L872.9 272.4 L878.4 270.3 L884.0 268.1 L889.5 265.9 L895.0 263.7 L900.5 261.6 L906.0 259.7 L911.6 257.8 L917.1 255.9 L922.6 254.1 L928.1 252.2 L933.6 250.3 L939.2 248.4 L944.7 246.6 L950.2 244.8 L955.7 242.9 L961.2 241.1 L966.8 239.2 L972.3 237.4 L977.8 235.5 L983.3 233.7 L988.8 232.0 L994.4 230.2 L999.9 228.4 L1005.4 226.6 L1010.9 224.9 L1016.4 223.1 L1022.0 221.3 L1027.5 219.5 L1033.0 217.8 L1038.5 216.0 L1044.0 214.2 L1049.6 212.4 L1055.1 210.7 L1060.6 208.9 L1066.1 207.1 L1071.6 205.3 L1077.2 203.6 L1082.7 201.8 L1088.2 200.0 L1093.7 198.2 L1099.2 196.4 L1104.8 194.7 L1110.3 192.9 L1115.8 191.2 L1121.3 189.5 L1126.8 187.7 L1132.4 186.0 L1137.9 184.3 L1143.4 182.5 L1148.9 180.8 M577.9 432.7 L583.4 428.6 L588.9 424.4 L594.4 420.3 L599.9 416.1 L605.5 412.0 L611.0 407.8 L616.5 403.7 L622.0 399.5 L627.5 395.3 L633.1 391.1 L638.6 386.9 L644.1 382.7 L649.6 378.5 L655.1 374.3 L660.7 370.1 L666.2 365.9 L671.7 361.7 L677.2 357.5 L682.7 353.4 L688.3 349.8 L693.8 346.4 L699.3 343.0 L704.8 339.7 L710.3 336.3 L715.9 332.9 L721.4 329.5 L726.9 326.2 L732.4 322.9 L737.9 319.7 L743.5 316.4 L749.0 313.1 L754.5 309.8 L760.0 306.5 L765.5 303.3 L771.1 300.3 L776.6 297.9 L782.1 295.4 L787.6 293.0 L793.1 290.6 L798.7 288.2 L804.2 285.7 L809.7 283.3 L815.2 280.9 L820.7 278.6 L826.3 276.5 L831.8 274.4 L837.3 272.2 L842.8 270.1 L848.3 268.0 L853.9 265.9 L859.4 263.8 L864.9 261.6 L870.4 259.4 L875.9 257.2 L881.5 255.0 L887.0 253.1 L892.5 251.3 L898.0 249.4 L903.5 247.5 L909.1 245.6 L914.6 243.7 L920.1 241.9 L925.6 240.0 L931.1 238.1 L936.7 236.3 L942.2 234.4 L947.7 232.5 L953.2 230.7 L958.7 228.8 L964.3 227.0 L969.8 225.2 L975.3 223.4 L980.8 221.6 L986.3 219.9 L991.9 218.1 L997.4 216.3 L1002.9 214.5 L1008.4 212.7 L1013.9 210.9 L1019.5 209.1 L1025.0 207.4 L1030.5 205.6 L1036.0 203.8 L1041.5 202.0 L1047.1 200.2 L1052.6 198.4 L1058.1 196.6 L1063.6 194.8 L1069.1 193.1 L1074.7 191.3 L1080.2 189.5 L1085.7 187.8 L1091.2 186.0 L1096.7 184.3 L1102.3 182.6 L1107.8 180.8 L1113.3 179.1 L1118.8 177.4 L1124.3 175.7 L1129.9 173.9" fill="none" stroke="#3c3c3c" stroke-width="0.9" opacity="0.75"/>
<path d="M1053.0 313.7 L1048.2 312.0 L1043.5 310.4 L1038.7 308.8 L1033.9 307.2 L1029.2 305.5 L1024.4 303.9 L1019.6 302.3 L1014.9 300.6 L1010.1 299.0 L1005.4 297.4 L1000.6 295.8 L995.8 294.1 L991.1 292.5 L986.3 290.9 L981.5 289.2 L976.8 287.6 L972.0 286.0 L967.2 284.4 L962.5 282.7 L957.7 281.1 L952.9 279.5 L948.2 277.8 L943.4 276.2 L938.6 274.6 L933.9 273.0 L929.1 271.3 L924.3 269.7 L919.6 268.1 L914.8 266.4 L910.0 264.8 L905.3 263.2 L900.5 261.6 L895.8 259.9 L891.0 258.3 L886.2 256.7 L881.5 255.0 L876.7 253.4 L871.9 251.8 L867.2 250.2 L862.4 248.5" fill="none" stroke="#303030" stroke-width="1.8"/>
<path d="M1053.0 313.7 L1048.2 312.0 L1043.5 310.4 L1038.7 308.8 L1033.9 307.2 L1029.2 305.5 L1024.4 303.9 L1019.6 302.3 L1014.9 300.6 L1010.1 299.0 L1005.4 297.4 L1000.6 295.8 L995.8 294.1 L991.1 292.5 L986.3 290.9 L981.5 289.2 L976.8 287.6 L972.0 286.0 L967.2 284.4 L962.5 282.7 L957.7 281.1 L952.9 279.5 L948.2 277.8 L943.4 276.2 L938.6 274.6 L933.9 273.0 L929.1 271.3 L924.3 269.7 L919.6 268.1 L914.8 266.4 L910.0 264.8 L905.3 263.2 L900.5 261.6 L895.8 259.9 L891.0 258.3 L886.2 256.7 L881.5 255.0 L876.7 253.4 L871.9 251.8 L867.2 250.2 L862.4 248.5" fill="none" stroke="#e8e8e0" stroke-width="0.9" stroke-dasharray="3 1"/>
<path d="M654.1 459.5 L659.6 455.6 L665.1 451.6 L670.7 447.7 L676.2 443.8 L681.7 439.8 L687.2 435.9 L692.7 432.0 L698.3 428.0 L703.8 424.1 L709.3 420.1 L714.8 416.0 L720.3 411.9 L725.9 407.9 L731.4 403.8 L736.9 399.7 L742.4 395.7 L747.9 391.7 L753.5 387.7 L759.0 383.6 L764.5 380.0 L770.0 376.4 L775.5 372.8 L781.1 369.3 L786.6 365.7 L792.1 362.1 L797.6 358.6 L803.1 355.1 L808.7 351.8 L814.2 348.6 L819.7 345.3 L825.2 342.1 L830.7 338.8 L836.3 335.5 L841.8 332.3 L847.3 329.2 L852.8 326.5 L858.3 323.8 L863.9 321.2 L869.4 318.5 L874.9 315.8 L880.4 313.1 L885.9 310.5 L891.5 308.0 L897.0 305.6 L902.5 303.3 L908.0 300.9 L913.5 298.6 L919.1 296.4 L924.6 294.2 L930.1 292.1 L935.6 289.9 L941.1 287.7 L946.7 285.5 L952.2 283.3 L957.7 281.1 L963.2 279.2 L968.7 277.4 L974.3 275.5 L979.8 273.7 L985.3 271.8 L990.8 270.0 L996.3 268.2 L1001.9 266.4 L1007.4 264.6 L1012.9 262.8 L1018.4 261.0 L1023.9 259.2 L1029.5 257.5 L1035.0 255.7 L1040.5 253.9 L1046.0 252.2 L1051.5 250.4 L1057.1 248.7 L1062.6 247.0 L1068.1 245.2 L1073.6 243.5 L1079.1 241.7 L1084.7 240.0 L1090.2 238.3 L1095.7 236.5 L1101.2 234.8 L1106.7 233.0 L1112.3 231.3 L1117.8 229.5 L1123.3 227.8 L1128.8 226.1 L1134.3 224.3 L1139.9 222.6 L1145.4 220.8 L1150.9 219.0 L1156.4 217.2 L1161.9 215.5 L1167.5 213.7 L1173.0 211.9 L1178.5 210.2 L1184.0 208.4 L1189.5 206.6 L1195.1 204.9 L1200.6 203.1 L1206.1 201.3" fill="none" stroke="#303030" stroke-width="1.8"/>
<path d="M654.1 459.5 L659.6 455.6 L665.1 451.6 L670.7 447.7 L676.2 443.8 L681.7 439.8 L687.2 435.9 L692.7 432.0 L698.3 428.0 L703.8 424.1 L709.3 420.1 L714.8 416.0 L720.3 411.9 L725.9 407.9 L731.4 403.8 L736.9 399.7 L742.4 395.7 L747.9 391.7 L753.5 387.7 L759.0 383.6 L764.5 380.0 L770.0 376.4 L775.5 372.8 L781.1 369.3 L786.6 365.7 L792.1 362.1 L797.6 358.6 L803.1 355.1 L808.7 351.8 L814.2 348.6 L819.7 345.3 L825.2 342.1 L830.7 338.8 L836.3 335.5 L841.8 332.3 L847.3 329.2 L852.8 326.5 L858.3 323.8 L863.9 321.2 L869.4 318.5 L874.9 315.8 L880.4 313.1 L885.9 310.5 L891.5 308.0 L897.0 305.6 L902.5 303.3 L908.0 300.9 L913.5 298.6 L919.1 296.4 L924.6 294.2 L930.1 292.1 L935.6 289.9 L941.1 287.7 L946.7 285.5 L952.2 283.3 L957.7 281.1 L963.2 279.2 L968.7 277.4 L974.3 275.5 L979.8 273.7 L985.3 271.8 L990.8 270.0 L996.3 268.2 L1001.9 266.4 L1007.4 264.6 L1012.9 262.8 L1018.4 261.0 L1023.9 259.2 L1029.5 257.5 L1035.0 255.7 L1040.5 253.9 L1046.0 252.2 L1051.5 250.4 L1057.1 248.7 L1062.6 247.0 L1068.1 245.2 L1073.6 243.5 L1079.1 241.7 L1084.7 240.0 L1090.2 238.3 L1095.7 236.5 L1101.2 234.8 L1106.7 233.0 L1112.3 231.3 L1117.8 229.5 L1123.3 227.8 L1128.8 226.1 L1134.3 224.3 L1139.9 222.6 L1145.4 220.8 L1150.9 219.0 L1156.4 217.2 L1161.9 215.5 L1167.5 213.7 L1173.0 211.9 L1178.5 210.2 L1184.0 208.4 L1189.5 206.6 L1195.1 204.9 L1200.6 203.1 L1206.1 201.3" fill="none" stroke="#e8e8e0" stroke-width="0.9" stroke-dasharray="3 1"/>
<polygon points="558.8,426.0 749.4,493.0 749.4,593.0 558.8,526.0" fill="#a3a388"/>
<polygon points="558.8,526.0 749.4,593.0 749.4,625.5 558.8,558.5" fill="url(#lhB)"/>
<polygon points="558.8,558.5 749.4,625.5 749.4,658.0 558.8,591.0" fill="url(#lhP)"/>
<polygon points="558.8,591.0 749.4,658.0 749.4,690.5 558.8,623.5" fill="url(#lhG)"/>
<polygon points="558.8,623.5 749.4,690.5 749.4,722.9 558.8,655.9" fill="url(#lhR)"/>
<text x="554.5" y="425.2" fill="#ff0000" font-size="20" text-anchor="middle" textLength="87" lengthAdjust="spacingAndGlyphs">Area 2 (2)</text>
<text x="661.5" y="339.8" fill="#ff0000" font-size="20" text-anchor="middle" textLength="39" lengthAdjust="spacingAndGlyphs">ZZ 3</text>
<text x="703.4" y="326.5" fill="#ff0000" font-size="20" text-anchor="middle" textLength="71" lengthAdjust="spacingAndGlyphs">BH 1 (5)</text>
<text x="788.8" y="357.2" fill="#ff0000" font-size="20" text-anchor="middle" textLength="39.6" lengthAdjust="spacingAndGlyphs">BH 1</text>
<text x="749.8" y="383.3" fill="#ff0000" font-size="20" text-anchor="middle" textLength="39.6" lengthAdjust="spacingAndGlyphs">ZZ 2</text>
<text x="877" y="391.8" fill="#ff0000" font-size="20" text-anchor="middle" textLength="70" lengthAdjust="spacingAndGlyphs">BH 1 (4)</text>
<text x="828" y="430.8" fill="#ff0000" font-size="20" text-anchor="middle" textLength="37.5" lengthAdjust="spacingAndGlyphs">ZZ 1</text>
<text x="956" y="279.3" fill="#ff0000" font-size="20" text-anchor="middle" textLength="48" lengthAdjust="spacingAndGlyphs">Red 1</text>
<text x="1206" y="198" fill="#ff0000" font-size="20" text-anchor="middle" textLength="70" lengthAdjust="spacingAndGlyphs">BH 1 (3)</text>
<text x="746.5" y="492" fill="#ff0000" font-size="20" text-anchor="middle" textLength="55" lengthAdjust="spacingAndGlyphs">Area 2</text>
<polygon points="749.4,493.0 752.2,491.2 754.9,489.3 757.7,487.5 760.4,485.7 763.2,483.9 766.0,482.0 768.7,480.2 771.5,478.4 774.2,476.5 777.0,474.7 779.8,472.9 782.5,471.1 785.3,469.2 788.0,467.4 790.8,465.6 793.6,463.7 796.3,461.9 799.1,460.1 801.8,458.2 804.6,456.2 807.4,454.3 810.1,452.4 812.9,450.4 815.6,448.5 818.4,446.5 821.2,444.6 823.9,442.6 826.7,440.7 829.4,438.7 832.2,436.8 835.0,434.8 837.7,432.9 840.5,431.0 843.2,429.1 846.0,427.2 848.8,425.3 851.5,423.4 854.3,421.5 857.0,419.6 859.8,417.7 862.6,415.8 865.3,413.9 868.1,412.0 870.8,410.1 873.6,408.2 876.4,406.3 879.1,404.4 881.9,402.5 884.6,400.6 887.4,398.6 890.2,396.7 892.9,394.9 895.7,393.1 898.4,391.3 901.2,389.5 904.0,387.9 906.7,386.3 909.5,384.7 912.2,383.1 915.0,381.5 917.8,379.9 920.5,378.2 923.3,376.6 926.0,375.0 928.8,373.4 931.6,371.8 934.3,370.2 937.1,368.6 939.8,367.0 942.6,365.3 945.4,363.8 948.1,362.3 950.9,360.8 953.6,359.3 956.4,357.8 959.2,356.3 961.9,354.8 964.7,353.3 967.4,351.9 970.2,350.4 973.0,348.9 975.7,347.4 978.5,345.9 981.2,344.4 984.0,343.1 986.8,341.9 989.5,340.6 992.3,339.3 995.0,338.0 997.8,336.7 1000.6,335.4 1003.3,334.1 1006.1,332.8 1008.8,331.6 1011.6,330.3 1014.4,329.2 1017.1,328.1 1019.9,327.0 1022.6,325.9 1025.4,324.8 1028.2,323.7 1030.9,322.6 1033.7,321.4 1036.4,320.3 1039.2,319.2 1042.0,318.1 1044.7,317.0 1047.5,315.9 1050.2,314.8 1053.0,313.7 1055.8,312.7 1058.5,311.8 1061.3,310.9 1064.0,310.0 1066.8,309.1 1069.6,308.2 1072.3,307.3 1075.1,306.4 1077.8,305.5 1080.6,304.6 1083.4,303.7 1086.1,302.8 1088.9,301.9 1091.6,301.1 1094.4,300.2 1097.2,299.4 1099.9,298.5 1102.7,297.7 1105.4,296.8 1108.2,296.0 1111.0,295.2 1113.7,294.3 1116.5,293.5 1119.2,292.6 1122.0,291.8 1124.8,290.9 1127.5,290.1 1130.3,289.3 1133.0,288.4 1135.8,287.6 1138.6,286.7 1141.3,285.9 1144.1,285.1 1146.8,284.2 1149.6,283.4 1152.4,282.5 1155.1,281.7 1157.9,280.8 1160.6,280.0 1163.4,279.2 1166.2,278.3 1168.9,277.5 1171.7,276.6 1174.4,275.8 1177.2,274.9 1180.0,274.1 1182.7,273.3 1185.5,272.4 1188.2,271.6 1191.0,270.7 1193.8,269.9 1196.5,269.0 1199.3,268.2 1202.0,267.4 1204.8,266.5 1207.6,265.7 1210.3,264.8 1213.1,264.0 1215.8,263.1 1218.6,262.3 1221.4,261.5 1224.1,260.6 1226.9,259.8 1229.6,258.9 1232.4,258.1 1235.2,257.2 1237.9,256.4 1240.7,255.5 1243.4,254.6 1246.2,253.7 1249.0,252.8 1251.7,251.9 1254.5,251.0 1257.2,250.1 1260.0,249.2 1262.8,248.3 1265.5,247.4 1268.3,246.5 1271.0,245.6 1273.8,244.7 1276.6,243.8 1279.3,242.8 1282.1,241.9 1284.8,241.0 1287.6,240.1 1290.4,239.2 1293.1,238.3 1295.9,237.4 1298.6,236.5 1301.4,235.6 1301.4,497.1 749.4,593.0" fill="#dfdfb8"/>
<polygon points="749.4,593.0 1301.4,497.1 1301.4,529.6 749.4,625.5" fill="url(#fhB)"/>
<polygon points="749.4,625.5 1301.4,529.6 1301.4,562.1 749.4,658.0" fill="url(#fhP)"/>
<polygon points="749.4,658.0 1301.4,562.1 1301.4,594.6 749.4,690.5" fill="url(#fhG)"/>
<polygon points="749.4,690.5 1301.4,594.6 1301.4,627.0 749.4,722.9" fill="url(#fhR)"/>
<polyline points="558.8,526.0 749.4,593.0 1301.4,497.1" fill="none" stroke="#e8eeec" stroke-width="0.9" opacity="0.85"/>
<polyline points="558.8,558.5 749.4,625.5 1301.4,529.6" fill="none" stroke="#e8eeec" stroke-width="0.9" opacity="0.85"/>
<polyline points="558.8,591.0 749.4,658.0 1301.4,562.1" fill="none" stroke="#e8eeec" stroke-width="0.9" opacity="0.85"/>
<polyline points="558.8,623.5 749.4,690.5 1301.4,594.6" fill="none" stroke="#e8eeec" stroke-width="0.9" opacity="0.85"/>
<line x1="654.6" y1="459.5" x2="654.6" y2="689.4" stroke="#3a3a3a" stroke-width="1.2"/>
<line x1="1053.0" y1="313.7" x2="1053.0" y2="670.2" stroke="#000" stroke-width="1.3"/>
<line x1="942.6" y1="365.3" x2="942.6" y2="689.4" stroke="#f4f4ea" stroke-width="1.3" opacity="0.85"/>
<path d="M749.4 493.0 L752.2 491.2 L754.9 489.3 L757.7 487.5 L760.4 485.7 L763.2 483.9 L766.0 482.0 L768.7 480.2 L771.5 478.4 L774.2 476.5 L777.0 474.7 L779.8 472.9 L782.5 471.1 L785.3 469.2 L788.0 467.4 L790.8 465.6 L793.6 463.7 L796.3 461.9 L799.1 460.1 L801.8 458.2 L804.6 456.2 L807.4 454.3 L810.1 452.4 L812.9 450.4 L815.6 448.5 L818.4 446.5 L821.2 444.6 L823.9 442.6 L826.7 440.7 L829.4 438.7 L832.2 436.8 L835.0 434.8 L837.7 432.9 L840.5 431.0 L843.2 429.1 L846.0 427.2 L848.8 425.3 L851.5 423.4 L854.3 421.5 L857.0 419.6 L859.8 417.7 L862.6 415.8 L865.3 413.9 L868.1 412.0 L870.8 410.1 L873.6 408.2 L876.4 406.3 L879.1 404.4 L881.9 402.5 L884.6 400.6 L887.4 398.6 L890.2 396.7 L892.9 394.9 L895.7 393.1 L898.4 391.3 L901.2 389.5 L904.0 387.9 L906.7 386.3 L909.5 384.7 L912.2 383.1 L915.0 381.5 L917.8 379.9 L920.5 378.2 L923.3 376.6 L926.0 375.0 L928.8 373.4 L931.6 371.8 L934.3 370.2 L937.1 368.6 L939.8 367.0 L942.6 365.3 L945.4 363.8 L948.1 362.3 L950.9 360.8 L953.6 359.3 L956.4 357.8 L959.2 356.3 L961.9 354.8 L964.7 353.3 L967.4 351.9 L970.2 350.4 L973.0 348.9 L975.7 347.4 L978.5 345.9 L981.2 344.4 L984.0 343.1 L986.8 341.9 L989.5 340.6 L992.3 339.3 L995.0 338.0 L997.8 336.7 L1000.6 335.4 L1003.3 334.1 L1006.1 332.8 L1008.8 331.6 L1011.6 330.3 L1014.4 329.2 L1017.1 328.1 L1019.9 327.0 L1022.6 325.9 L1025.4 324.8 L1028.2 323.7 L1030.9 322.6 L1033.7 321.4 L1036.4 320.3 L1039.2 319.2 L1042.0 318.1 L1044.7 317.0 L1047.5 315.9 L1050.2 314.8 L1053.0 313.7 L1055.8 312.7 L1058.5 311.8 L1061.3 310.9 L1064.0 310.0 L1066.8 309.1 L1069.6 308.2 L1072.3 307.3 L1075.1 306.4 L1077.8 305.5 L1080.6 304.6 L1083.4 303.7 L1086.1 302.8 L1088.9 301.9 L1091.6 301.1 L1094.4 300.2 L1097.2 299.4 L1099.9 298.5 L1102.7 297.7 L1105.4 296.8 L1108.2 296.0 L1111.0 295.2 L1113.7 294.3 L1116.5 293.5 L1119.2 292.6 L1122.0 291.8 L1124.8 290.9 L1127.5 290.1 L1130.3 289.3 L1133.0 288.4 L1135.8 287.6 L1138.6 286.7 L1141.3 285.9 L1144.1 285.1 L1146.8 284.2 L1149.6 283.4 L1152.4 282.5 L1155.1 281.7 L1157.9 280.8 L1160.6 280.0 L1163.4 279.2 L1166.2 278.3 L1168.9 277.5 L1171.7 276.6 L1174.4 275.8 L1177.2 274.9 L1180.0 274.1 L1182.7 273.3 L1185.5 272.4 L1188.2 271.6 L1191.0 270.7 L1193.8 269.9 L1196.5 269.0 L1199.3 268.2 L1202.0 267.4 L1204.8 266.5 L1207.6 265.7 L1210.3 264.8 L1213.1 264.0 L1215.8 263.1 L1218.6 262.3 L1221.4 261.5 L1224.1 260.6 L1226.9 259.8 L1229.6 258.9 L1232.4 258.1 L1235.2 257.2 L1237.9 256.4 L1240.7 255.5 L1243.4 254.6 L1246.2 253.7 L1249.0 252.8 L1251.7 251.9 L1254.5 251.0 L1257.2 250.1 L1260.0 249.2 L1262.8 248.3 L1265.5 247.4 L1268.3 246.5 L1271.0 245.6 L1273.8 244.7 L1276.6 243.8 L1279.3 242.8 L1282.1 241.9 L1284.8 241.0 L1287.6 240.1 L1290.4 239.2 L1293.1 238.3 L1295.9 237.4 L1298.6 236.5 L1301.4 235.6" fill="none" stroke="#2a2a2a" stroke-width="1.9"/>
<path d="M749.4 493.0 L752.2 491.2 L754.9 489.3 L757.7 487.5 L760.4 485.7 L763.2 483.9 L766.0 482.0 L768.7 480.2 L771.5 478.4 L774.2 476.5 L777.0 474.7 L779.8 472.9 L782.5 471.1 L785.3 469.2 L788.0 467.4 L790.8 465.6 L793.6 463.7 L796.3 461.9 L799.1 460.1 L801.8 458.2 L804.6 456.2 L807.4 454.3 L810.1 452.4 L812.9 450.4 L815.6 448.5 L818.4 446.5 L821.2 444.6 L823.9 442.6 L826.7 440.7 L829.4 438.7 L832.2 436.8 L835.0 434.8 L837.7 432.9 L840.5 431.0 L843.2 429.1 L846.0 427.2 L848.8 425.3 L851.5 423.4 L854.3 421.5 L857.0 419.6 L859.8 417.7 L862.6 415.8 L865.3 413.9 L868.1 412.0 L870.8 410.1 L873.6 408.2 L876.4 406.3 L879.1 404.4 L881.9 402.5 L884.6 400.6 L887.4 398.6 L890.2 396.7 L892.9 394.9 L895.7 393.1 L898.4 391.3 L901.2 389.5 L904.0 387.9 L906.7 386.3 L909.5 384.7 L912.2 383.1 L915.0 381.5 L917.8 379.9 L920.5 378.2 L923.3 376.6 L926.0 375.0 L928.8 373.4 L931.6 371.8 L934.3 370.2 L937.1 368.6 L939.8 367.0 L942.6 365.3 L945.4 363.8 L948.1 362.3 L950.9 360.8 L953.6 359.3 L956.4 357.8 L959.2 356.3 L961.9 354.8 L964.7 353.3 L967.4 351.9 L970.2 350.4 L973.0 348.9 L975.7 347.4 L978.5 345.9 L981.2 344.4 L984.0 343.1 L986.8 341.9 L989.5 340.6 L992.3 339.3 L995.0 338.0 L997.8 336.7 L1000.6 335.4 L1003.3 334.1 L1006.1 332.8 L1008.8 331.6 L1011.6 330.3 L1014.4 329.2 L1017.1 328.1 L1019.9 327.0 L1022.6 325.9 L1025.4 324.8 L1028.2 323.7 L1030.9 322.6 L1033.7 321.4 L1036.4 320.3 L1039.2 319.2 L1042.0 318.1 L1044.7 317.0 L1047.5 315.9 L1050.2 314.8 L1053.0 313.7 L1055.8 312.7 L1058.5 311.8 L1061.3 310.9 L1064.0 310.0 L1066.8 309.1 L1069.6 308.2 L1072.3 307.3 L1075.1 306.4 L1077.8 305.5 L1080.6 304.6 L1083.4 303.7 L1086.1 302.8 L1088.9 301.9 L1091.6 301.1 L1094.4 300.2 L1097.2 299.4 L1099.9 298.5 L1102.7 297.7 L1105.4 296.8 L1108.2 296.0 L1111.0 295.2 L1113.7 294.3 L1116.5 293.5 L1119.2 292.6 L1122.0 291.8 L1124.8 290.9 L1127.5 290.1 L1130.3 289.3 L1133.0 288.4 L1135.8 287.6 L1138.6 286.7 L1141.3 285.9 L1144.1 285.1 L1146.8 284.2 L1149.6 283.4 L1152.4 282.5 L1155.1 281.7 L1157.9 280.8 L1160.6 280.0 L1163.4 279.2 L1166.2 278.3 L1168.9 277.5 L1171.7 276.6 L1174.4 275.8 L1177.2 274.9 L1180.0 274.1 L1182.7 273.3 L1185.5 272.4 L1188.2 271.6 L1191.0 270.7 L1193.8 269.9 L1196.5 269.0 L1199.3 268.2 L1202.0 267.4 L1204.8 266.5 L1207.6 265.7 L1210.3 264.8 L1213.1 264.0 L1215.8 263.1 L1218.6 262.3 L1221.4 261.5 L1224.1 260.6 L1226.9 259.8 L1229.6 258.9 L1232.4 258.1 L1235.2 257.2 L1237.9 256.4 L1240.7 255.5 L1243.4 254.6 L1246.2 253.7 L1249.0 252.8 L1251.7 251.9 L1254.5 251.0 L1257.2 250.1 L1260.0 249.2 L1262.8 248.3 L1265.5 247.4 L1268.3 246.5 L1271.0 245.6 L1273.8 244.7 L1276.6 243.8 L1279.3 242.8 L1282.1 241.9 L1284.8 241.0 L1287.6 240.1 L1290.4 239.2 L1293.1 238.3 L1295.9 237.4 L1298.6 236.5 L1301.4 235.6" fill="none" stroke="#f0f0e8" stroke-width="1" stroke-dasharray="3 1"/>
<path d="M558.8 426.0 L561.6 423.9 L564.3 421.8 L567.1 419.7 L569.8 417.6 L572.6 415.5 L575.4 413.4 L578.1 411.3 L580.9 409.2 L583.6 407.1 L586.4 405.0 L589.2 402.9 L591.9 400.8 L594.7 398.7 L597.4 396.6 L600.2 394.5 L603.0 392.4 L605.7 390.2 L608.5 388.1 L611.2 386.0 L614.0 383.9 L616.8 381.8 L619.5 379.7 L622.3 377.5 L625.0 375.4 L627.8 373.3 L630.6 371.2 L633.3 369.1 L636.1 367.0 L638.8 364.8 L641.6 362.7 L644.4 360.6 L647.1 358.5 L649.9 356.4 L652.6 354.3 L655.4 352.1 L658.2 350.0 L660.9 347.9 L663.7 345.8 L666.4 343.9 L669.2 342.3 L672.0 340.6 L674.7 338.9 L677.5 337.3 L680.2 335.6 L683.0 333.9 L685.8 332.3 L688.5 330.6 L691.3 328.9 L694.0 327.3 L696.8 325.6 L699.6 323.9 L702.3 322.3 L705.1 320.6 L707.8 319.0 L710.6 317.4 L713.4 315.7 L716.1 314.1 L718.9 312.4 L721.6 310.8 L724.4 309.1 L727.2 307.5 L729.9 305.9 L732.7 304.2 L735.4 302.6 L738.2 300.9 L741.0 299.3 L743.7 297.7 L746.5 296.0 L749.2 294.4 L752.0 293.1 L754.8 291.9 L757.5 290.7 L760.3 289.5 L763.0 288.3 L765.8 287.1 L768.6 286.0 L771.3 284.8 L774.1 283.6 L776.8 282.4 L779.6 281.2 L782.4 280.1 L785.1 278.9 L787.9 277.7 L790.6 276.5 L793.4 275.3 L796.2 274.2 L798.9 273.0 L801.7 271.9 L804.4 270.8 L807.2 269.8 L810.0 268.8 L812.7 267.7 L815.5 266.7 L818.2 265.6 L821.0 264.6 L823.8 263.5 L826.5 262.5 L829.3 261.4 L832.0 260.4 L834.8 259.3 L837.6 258.3 L840.3 257.2 L843.1 256.2 L845.8 255.1 L848.6 254.0 L851.4 252.9 L854.1 251.8 L856.9 250.7 L859.6 249.6 L862.4 248.5 L865.2 247.6 L867.9 246.6 L870.7 245.7 L873.4 244.7 L876.2 243.8 L879.0 242.9 L881.7 241.9 L884.5 241.0 L887.2 240.0 L890.0 239.1 L892.8 238.1 L895.5 237.2 L898.3 236.2 L901.0 235.3 L903.8 234.4 L906.6 233.4 L909.3 232.5 L912.1 231.5 L914.8 230.6 L917.6 229.6 L920.4 228.7 L923.1 227.7 L925.9 226.8 L928.6 225.8 L931.4 224.9 L934.2 224.0 L936.9 223.0 L939.7 222.1 L942.4 221.2 L945.2 220.3 L948.0 219.4 L950.7 218.5 L953.5 217.6 L956.2 216.7 L959.0 215.8 L961.8 214.9 L964.5 214.0 L967.3 213.1 L970.0 212.2 L972.8 211.3 L975.6 210.4 L978.3 209.5 L981.1 208.6 L983.8 207.7 L986.6 206.8 L989.4 205.9 L992.1 205.0 L994.9 204.1 L997.6 203.2 L1000.4 202.3 L1003.2 201.4 L1005.9 200.5 L1008.7 199.6 L1011.4 198.7 L1014.2 197.8 L1017.0 196.9 L1019.7 196.0 L1022.5 195.1 L1025.2 194.2 L1028.0 193.3 L1030.8 192.4 L1033.5 191.5 L1036.3 190.6 L1039.0 189.7 L1041.8 188.8 L1044.6 187.9 L1047.3 187.0 L1050.1 186.1 L1052.8 185.2 L1055.6 184.3 L1058.4 183.4 L1061.1 182.5 L1063.9 181.7 L1066.6 180.8 L1069.4 180.0 L1072.2 179.1 L1074.9 178.2 L1077.7 177.4 L1080.4 176.5 L1083.2 175.7 L1086.0 174.8 L1088.7 174.0 L1091.5 173.1 L1094.2 172.2 L1097.0 171.4 L1099.8 170.5 L1102.5 169.7 L1105.3 168.8 L1108.0 167.9 L1110.8 167.1" fill="none" stroke="#2a2a2a" stroke-width="1.9"/>
<path d="M558.8 426.0 L561.6 423.9 L564.3 421.8 L567.1 419.7 L569.8 417.6 L572.6 415.5 L575.4 413.4 L578.1 411.3 L580.9 409.2 L583.6 407.1 L586.4 405.0 L589.2 402.9 L591.9 400.8 L594.7 398.7 L597.4 396.6 L600.2 394.5 L603.0 392.4 L605.7 390.2 L608.5 388.1 L611.2 386.0 L614.0 383.9 L616.8 381.8 L619.5 379.7 L622.3 377.5 L625.0 375.4 L627.8 373.3 L630.6 371.2 L633.3 369.1 L636.1 367.0 L638.8 364.8 L641.6 362.7 L644.4 360.6 L647.1 358.5 L649.9 356.4 L652.6 354.3 L655.4 352.1 L658.2 350.0 L660.9 347.9 L663.7 345.8 L666.4 343.9 L669.2 342.3 L672.0 340.6 L674.7 338.9 L677.5 337.3 L680.2 335.6 L683.0 333.9 L685.8 332.3 L688.5 330.6 L691.3 328.9 L694.0 327.3 L696.8 325.6 L699.6 323.9 L702.3 322.3 L705.1 320.6 L707.8 319.0 L710.6 317.4 L713.4 315.7 L716.1 314.1 L718.9 312.4 L721.6 310.8 L724.4 309.1 L727.2 307.5 L729.9 305.9 L732.7 304.2 L735.4 302.6 L738.2 300.9 L741.0 299.3 L743.7 297.7 L746.5 296.0 L749.2 294.4 L752.0 293.1 L754.8 291.9 L757.5 290.7 L760.3 289.5 L763.0 288.3 L765.8 287.1 L768.6 286.0 L771.3 284.8 L774.1 283.6 L776.8 282.4 L779.6 281.2 L782.4 280.1 L785.1 278.9 L787.9 277.7 L790.6 276.5 L793.4 275.3 L796.2 274.2 L798.9 273.0 L801.7 271.9 L804.4 270.8 L807.2 269.8 L810.0 268.8 L812.7 267.7 L815.5 266.7 L818.2 265.6 L821.0 264.6 L823.8 263.5 L826.5 262.5 L829.3 261.4 L832.0 260.4 L834.8 259.3 L837.6 258.3 L840.3 257.2 L843.1 256.2 L845.8 255.1 L848.6 254.0 L851.4 252.9 L854.1 251.8 L856.9 250.7 L859.6 249.6 L862.4 248.5 L865.2 247.6 L867.9 246.6 L870.7 245.7 L873.4 244.7 L876.2 243.8 L879.0 242.9 L881.7 241.9 L884.5 241.0 L887.2 240.0 L890.0 239.1 L892.8 238.1 L895.5 237.2 L898.3 236.2 L901.0 235.3 L903.8 234.4 L906.6 233.4 L909.3 232.5 L912.1 231.5 L914.8 230.6 L917.6 229.6 L920.4 228.7 L923.1 227.7 L925.9 226.8 L928.6 225.8 L931.4 224.9 L934.2 224.0 L936.9 223.0 L939.7 222.1 L942.4 221.2 L945.2 220.3 L948.0 219.4 L950.7 218.5 L953.5 217.6 L956.2 216.7 L959.0 215.8 L961.8 214.9 L964.5 214.0 L967.3 213.1 L970.0 212.2 L972.8 211.3 L975.6 210.4 L978.3 209.5 L981.1 208.6 L983.8 207.7 L986.6 206.8 L989.4 205.9 L992.1 205.0 L994.9 204.1 L997.6 203.2 L1000.4 202.3 L1003.2 201.4 L1005.9 200.5 L1008.7 199.6 L1011.4 198.7 L1014.2 197.8 L1017.0 196.9 L1019.7 196.0 L1022.5 195.1 L1025.2 194.2 L1028.0 193.3 L1030.8 192.4 L1033.5 191.5 L1036.3 190.6 L1039.0 189.7 L1041.8 188.8 L1044.6 187.9 L1047.3 187.0 L1050.1 186.1 L1052.8 185.2 L1055.6 184.3 L1058.4 183.4 L1061.1 182.5 L1063.9 181.7 L1066.6 180.8 L1069.4 180.0 L1072.2 179.1 L1074.9 178.2 L1077.7 177.4 L1080.4 176.5 L1083.2 175.7 L1086.0 174.8 L1088.7 174.0 L1091.5 173.1 L1094.2 172.2 L1097.0 171.4 L1099.8 170.5 L1102.5 169.7 L1105.3 168.8 L1108.0 167.9 L1110.8 167.1" fill="none" stroke="#f0f0e8" stroke-width="1" stroke-dasharray="3 1"/>
<path d="M749.4 493.0 L558.8 426.0" fill="none" stroke="#2a2a2a" stroke-width="1.9"/>
<path d="M749.4 493.0 L558.8 426.0" fill="none" stroke="#f0f0e8" stroke-width="1" stroke-dasharray="3 1"/>
<path d="M1301.4 235.6 L1110.8 167.1" fill="none" stroke="#2a2a2a" stroke-width="1.9"/>
<path d="M1301.4 235.6 L1110.8 167.1" fill="none" stroke="#f0f0e8" stroke-width="1" stroke-dasharray="3 1"/>
<rect x="745.5" y="499.0" width="4.5" height="96.0" fill="#aaa65a"/><rect x="750.0" y="499.0" width="4.5" height="96.0" fill="#e2de7e"/><rect x="745.5" y="595.0" width="4.5" height="32.0" fill="#4a86a8"/><rect x="750.0" y="595.0" width="4.5" height="32.0" fill="#64acd6"/><rect x="745.5" y="627.0" width="4.5" height="32.0" fill="#4848a6"/><rect x="750.0" y="627.0" width="4.5" height="32.0" fill="#6464d2"/><rect x="745.5" y="659.0" width="4.5" height="33.0" fill="#4a9a4a"/><rect x="750.0" y="659.0" width="4.5" height="33.0" fill="#5cc45c"/><rect x="745.5" y="692.0" width="4.5" height="33.0" fill="#8a6a48"/><rect x="750.0" y="692.0" width="4.5" height="33.0" fill="#b08a62"/>
<rect x="829.0" y="440.0" width="4.5" height="24.0" fill="#5088b0"/><rect x="833.5" y="440.0" width="4.5" height="24.0" fill="#70b0da"/><rect x="829.0" y="464.0" width="4.5" height="28.0" fill="#5050a8"/><rect x="833.5" y="464.0" width="4.5" height="28.0" fill="#6868d4"/><rect x="829.0" y="492.0" width="4.5" height="51.0" fill="#48a048"/><rect x="833.5" y="492.0" width="4.5" height="51.0" fill="#60c460"/>
<path d="M727.2 725.3H750.6L743.1 727.2L756.2 732.3L743.4 734.5L729.4 729.4L721.6 730.6Z" fill="none" stroke="#10b8f8" stroke-width="1.4" stroke-linejoin="round"/>
<rect x="551.5" y="422.0" width="9" height="9" fill="#5aaad8"/><rect x="551.5" y="422.0" width="4" height="9" fill="#2a6a90" opacity="0.35"/><ellipse cx="556.0" cy="423.5" rx="2.5" ry="1" fill="#1a3a50"/>
<rect x="746.0" y="290.0" width="9" height="6" fill="#5aaad8"/><rect x="746.0" y="290.0" width="4" height="6" fill="#2a6a90" opacity="0.35"/><ellipse cx="750.5" cy="291.5" rx="2.5" ry="1" fill="#1a3a50"/>
<rect x="1106.0" y="162.0" width="9" height="5.5" fill="#5aaad8"/><rect x="1106.0" y="162.0" width="4" height="5.5" fill="#2a6a90" opacity="0.35"/><ellipse cx="1110.5" cy="163.5" rx="2.5" ry="1" fill="#1a3a50"/>
<rect x="1299.2" y="231.0" width="9" height="9" fill="#5aaad8"/><rect x="1299.2" y="231.0" width="4" height="9" fill="#2a6a90" opacity="0.35"/><ellipse cx="1303.7" cy="232.5" rx="2.5" ry="1" fill="#1a3a50"/>
<rect x="939.1" y="360.0" width="9" height="8" fill="#5aaad8"/><rect x="939.1" y="360.0" width="4" height="8" fill="#2a6a90" opacity="0.35"/><ellipse cx="943.6" cy="361.5" rx="2.5" ry="1" fill="#1a3a50"/>
<rect x="745.2" y="492.0" width="9" height="8" fill="#5aaad8"/><rect x="745.2" y="492.0" width="4" height="8" fill="#2a6a90" opacity="0.35"/><ellipse cx="749.7" cy="493.5" rx="2.5" ry="1" fill="#1a3a50"/>
<path d="M661.0 341.5L664.0 339.0H671.0V343.0L667.0 345.5H661.0Z" fill="#18b4c4"/><path d="M661.0 341.5L664.0 339.0H671.0L667.0 341.5Z" fill="#30c8d8"/><ellipse cx="666.0" cy="340.3" rx="2" ry="0.8" fill="#0a5060"/>
<path d="M699.0 325.5L702.0 323.0H709.0V327.0L705.0 329.5H699.0Z" fill="#18b4c4"/><path d="M699.0 325.5L702.0 323.0H709.0L705.0 325.5Z" fill="#30c8d8"/><ellipse cx="704.0" cy="324.3" rx="2" ry="0.8" fill="#0a5060"/>
<path d="M785.0 360.5L788.0 358.0H795.0V362.0L791.0 364.5H785.0Z" fill="#18b4c4"/><path d="M785.0 360.5L788.0 358.0H795.0L791.0 360.5Z" fill="#30c8d8"/><ellipse cx="790.0" cy="359.3" rx="2" ry="0.8" fill="#0a5060"/>
<path d="M750.0 383.5L753.0 381.0H760.0V385.0L756.0 387.5H750.0Z" fill="#18b4c4"/><path d="M750.0 383.5L753.0 381.0H760.0L756.0 383.5Z" fill="#30c8d8"/><ellipse cx="755.0" cy="382.3" rx="2" ry="0.8" fill="#0a5060"/>
<path d="M873.0 391.5L876.0 389.0H883.0V393.0L879.0 395.5H873.0Z" fill="#18b4c4"/><path d="M873.0 391.5L876.0 389.0H883.0L879.0 391.5Z" fill="#30c8d8"/><ellipse cx="878.0" cy="390.3" rx="2" ry="0.8" fill="#0a5060"/>
<path d="M953.0 281.5L956.0 279.0H963.0V283.0L959.0 285.5H953.0Z" fill="#18b4c4"/><path d="M953.0 281.5L956.0 279.0H963.0L959.0 281.5Z" fill="#30c8d8"/><ellipse cx="958.0" cy="280.3" rx="2" ry="0.8" fill="#0a5060"/>
<path d="M1203.0 198.5L1206.0 196.0H1213.0V200.0L1209.0 202.5H1203.0Z" fill="#18b4c4"/><path d="M1203.0 198.5L1206.0 196.0H1213.0L1209.0 198.5Z" fill="#30c8d8"/><ellipse cx="1208.0" cy="197.3" rx="2" ry="0.8" fill="#0a5060"/>
<rect x="829.0" y="431.5" width="9" height="8" fill="#18b0c0"/><rect x="829.0" y="431.5" width="4" height="8" fill="#0a7080" opacity="0.35"/><ellipse cx="833.5" cy="433.0" rx="2.5" ry="1" fill="#1a3a50"/>
</svg></div>
<div style="position:absolute;left:5px;top:802px;width:20px;height:247px;background:#d1d1d1"></div>
<div style="position:absolute;left:17px;top:810px;width:2px;height:6px;background:#111"></div>
<div class="t" style="left:8px;top:1045px;transform-origin:0 0;transform:rotate(-90deg)">Geological Model</div>
<div style="position:absolute;left:32px;top:810px;width:130px;height:22px;background:#e1e1e1;border:1px solid #adadad;box-sizing:border-box"></div>
<svg style="position:absolute;left:38px;top:815px;" width="12" height="12" viewBox="0 0 12 12"><path d="M6 0.5V11.5M0.5 6H11.5" stroke="#0a0" stroke-width="4.2"/><path d="M6 1.5V10.5M1.5 6H10.5" stroke="#8c0" stroke-width="2"/></svg>
<svg style="position:absolute;left:52px;top:813px;" width="18" height="16" viewBox="0 0 18 16"><g transform="rotate(45 8 9)"><rect x="4" y="2.5" width="8" height="12.5" rx="4" fill="#fff" stroke="#111" stroke-width="1.1"/><path d="M4.2 8H11.8M8 3V8" stroke="#111" stroke-width=".9"/><path d="M7.6 3Q4.5 3.5 4.5 7.6H7.6Z" fill="#7c0"/><path d="M8.4 3.2Q11.3 4 11.4 7.6H8.4Z" fill="#111"/></g><path d="M12.5 3Q14 0.5 15.5 2.5T17.5 3.5" fill="none" stroke="#111" stroke-width=".9"/></svg>
<div class="t" style="left:75px;top:813px;">Add graphically</div>
<div style="position:absolute;left:168px;top:810px;width:115px;height:22px;background:#e1e1e1;border:1px solid #adadad;box-sizing:border-box"></div>
<svg style="position:absolute;left:174px;top:815px;" width="12" height="12" viewBox="0 0 12 12"><path d="M6 0.5V11.5M0.5 6H11.5" stroke="#0a0" stroke-width="4.2"/><path d="M6 1.5V10.5M1.5 6H10.5" stroke="#8c0" stroke-width="2"/></svg>
<svg style="position:absolute;left:187px;top:812px;" width="20" height="18" viewBox="0 0 20 18"><rect x="1.5" y="5.5" width="17" height="11" rx="1.5" fill="#fff" stroke="#111" stroke-width="1.2"/><g fill="#0a0"><rect x="4" y="8" width="2" height="1"/><rect x="7" y="8" width="2" height="1"/><rect x="10" y="8" width="2" height="1"/><rect x="13" y="8" width="2" height="1"/><rect x="4" y="10" width="2" height="1"/><rect x="7" y="10" width="2" height="1"/><rect x="10" y="10" width="2" height="1"/><rect x="13" y="10" width="2" height="1"/></g><rect x="5" y="12.5" width="10" height="1.5" fill="#111"/><path d="M10 5.5V3.5Q10 2 12 2H16" fill="none" stroke="#111" stroke-width="1"/></svg>
<div class="t" style="left:211px;top:813px;">Add textually</div>
<div style="position:absolute;left:32px;top:840px;width:64px;height:58px;background:#e1e1e1;border:1px solid #adadad;box-sizing:border-box"></div>
<div style="position:absolute;left:33px;top:841px;width:11px;height:56px;background:#00b400"></div>
<svg style="position:absolute;left:54px;top:845px;" width="32" height="32" viewBox="0 0 32 32"><g fill="#000"><rect x="6" y="1" width="1" height="4"/><rect x="1" y="6" width="4" height="1"/><rect x="25" y="6" width="4" height="1"/><rect x="8" y="1" width="1" height="4"/><rect x="1" y="8" width="4" height="1"/><rect x="25" y="8" width="4" height="1"/><rect x="10" y="1" width="1" height="4"/><rect x="1" y="10" width="4" height="1"/><rect x="25" y="10" width="4" height="1"/><rect x="12" y="1" width="1" height="4"/><rect x="1" y="12" width="4" height="1"/><rect x="25" y="12" width="4" height="1"/><rect x="14" y="1" width="1" height="4"/><rect x="1" y="14" width="4" height="1"/><rect x="25" y="14" width="4" height="1"/><rect x="16" y="1" width="1" height="4"/><rect x="1" y="16" width="4" height="1"/><rect x="25" y="16" width="4" height="1"/><rect x="18" y="1" width="1" height="4"/><rect x="1" y="18" width="4" height="1"/><rect x="25" y="18" width="4" height="1"/><rect x="20" y="1" width="1" height="4"/><rect x="1" y="20" width="4" height="1"/><rect x="25" y="20" width="4" height="1"/><rect x="7" y="25" width="1" height="4"/><rect x="9" y="25" width="1" height="4"/><rect x="11" y="25" width="1" height="4"/><rect x="13" y="25" width="1" height="4"/><rect x="15" y="25" width="1" height="4"/><rect x="17" y="25" width="1" height="4"/><rect x="5" y="5" width="20" height="20"/></g><rect x="8.5" y="8.5" width="13" height="13" fill="none" stroke="#fff"/><g fill="#fff"><rect x="12" y="12" width="1" height="1"/><rect x="14" y="12" width="1" height="1"/><rect x="16" y="12" width="1" height="1"/><rect x="12" y="14" width="2" height="1"/><rect x="15" y="14" width="2" height="1"/><rect x="12" y="16" width="4" height="1"/></g><circle cx="22.8" cy="22.9" r="7.2" fill="#0a8c0a" stroke="#f0f0f0" stroke-width=".6"/><path d="M19.8 18.6L27 22.9L19.8 27.2Z" fill="#fff"/></svg>
<div class="t" style="left:46px;top:879px;letter-spacing:-0.4px">Generate</div>
<div style="position:absolute;left:114px;top:840px;width:932px;height:202px;border:1px solid #000;box-sizing:border-box;background:#f0f0f0"></div>
<div style="position:absolute;left:173px;top:881px;width:852px;height:159px;background:#fff"></div>
<div style="position:absolute;left:676px;top:881px;width:53px;height:159px;background:#efe6aa"></div>
<div style="position:absolute;left:115px;top:880px;width:910px;height:1px;background:#000"></div>
<div style="position:absolute;left:172px;top:841px;width:1px;height:199px;background:#000"></div>
<div style="position:absolute;left:573px;top:841px;width:1px;height:199px;background:#a0a0a0"></div>
<div style="position:absolute;left:624px;top:841px;width:1px;height:199px;background:#a0a0a0"></div>
<div style="position:absolute;left:675px;top:841px;width:1px;height:199px;background:#a0a0a0"></div>
<div style="position:absolute;left:729px;top:841px;width:1px;height:199px;background:#a0a0a0"></div>
<div style="position:absolute;left:803px;top:860px;width:1px;height:180px;background:#a0a0a0"></div>
<div style="position:absolute;left:877px;top:860px;width:1px;height:180px;background:#a0a0a0"></div>
<div style="position:absolute;left:951px;top:841px;width:1px;height:199px;background:#a0a0a0"></div>
<div style="position:absolute;left:1025px;top:841px;width:1px;height:199px;background:#000"></div>
<div style="position:absolute;left:115px;top:900px;width:910px;height:1px;background:#a0a0a0"></div>
<div style="position:absolute;left:115px;top:920px;width:910px;height:1px;background:#a0a0a0"></div>
<div style="position:absolute;left:115px;top:940px;width:910px;height:1px;background:#a0a0a0"></div>
<div style="position:absolute;left:115px;top:960px;width:910px;height:1px;background:#a0a0a0"></div>
<div style="position:absolute;left:115px;top:980px;width:910px;height:1px;background:#a0a0a0"></div>
<div style="position:absolute;left:115px;top:1000px;width:910px;height:1px;background:#a0a0a0"></div>
<div style="position:absolute;left:115px;top:1020px;width:910px;height:1px;background:#a0a0a0"></div>
<div class="t" style="left:114px;top:843px;width:58px;text-align:center;">No.</div>
<div class="t" style="left:172px;top:843px;width:401px;text-align:center;">Name</div>
<div class="t" style="left:573px;top:843px;width:51px;text-align:center;">Master</div>
<div class="t" style="left:624px;top:843px;width:51px;text-align:center;">Active</div>
<div class="t" style="left:675px;top:843px;width:54px;text-align:center;">Status</div>
<div class="t" style="left:729px;top:843px;width:222px;text-align:center;">Location</div>
<div class="t" style="left:951px;top:843px;width:74px;text-align:center;">GWT depth</div>
<div class="t" style="left:729px;top:863px;width:74px;text-align:center;">x [m]</div>
<div class="t" style="left:803px;top:863px;width:74px;text-align:center;">y [m]</div>
<div class="t" style="left:877px;top:863px;width:74px;text-align:center;">z [m]</div>
<div class="t" style="left:951px;top:863px;width:74px;text-align:center;">h<span style="font-size:9px;vertical-align:-2px">GWT</span> [m]</div>
<div class="t" style="left:120px;top:883px;width:50px;text-align:right">2</div>
<div class="t" style="left:176px;top:883px;">BH 1 (3)</div>
<svg style="position:absolute;left:591px;top:884px;" width="14" height="14" viewBox="0 0 14 14"><circle cx="7" cy="7" r="5.6" fill="#fff" stroke="#000" stroke-width="1.8"/></svg>
<svg style="position:absolute;left:642px;top:884px;" width="14" height="14" viewBox="0 0 14 14"><rect x="1" y="1" width="12" height="12" fill="#fff" stroke="#000" stroke-width="2"/><path d="M3.5 7L6 10L10.5 3.5" fill="none" stroke="#000" stroke-width="2"/></svg>
<div class="t" style="left:679px;top:883px;">New</div>
<div class="t" style="left:729px;top:883px;width:73px;text-align:right">20,00</div>
<div class="t" style="left:803px;top:883px;width:73.5px;text-align:right">5,00</div>
<div class="t" style="left:877px;top:883px;width:73.5px;text-align:right">5,00</div>
<div class="t" style="left:120px;top:903px;width:50px;text-align:right">3</div>
<div class="t" style="left:176px;top:903px;">BH 1 (4)</div>
<svg style="position:absolute;left:591px;top:904px;" width="14" height="14" viewBox="0 0 14 14"><circle cx="7" cy="7" r="5.6" fill="#fff" stroke="#000" stroke-width="1.8"/></svg>
<svg style="position:absolute;left:642px;top:904px;" width="14" height="14" viewBox="0 0 14 14"><rect x="1" y="1" width="12" height="12" fill="#fff" stroke="#000" stroke-width="2"/><path d="M3.5 7L6 10L10.5 3.5" fill="none" stroke="#000" stroke-width="2"/></svg>
<div class="t" style="left:679px;top:903px;">New</div>
<div class="t" style="left:729px;top:903px;width:73px;text-align:right">5,00</div>
<div class="t" style="left:803px;top:903px;width:73.5px;text-align:right">0,50</div>
<div class="t" style="left:877px;top:903px;width:73.5px;text-align:right">2,24</div>
<div class="t" style="left:120px;top:923px;width:50px;text-align:right">4</div>
<div class="t" style="left:176px;top:923px;">BH 1 (5)</div>
<svg style="position:absolute;left:591px;top:924px;" width="14" height="14" viewBox="0 0 14 14"><circle cx="7" cy="7" r="5.6" fill="#fff" stroke="#000" stroke-width="1.8"/></svg>
<svg style="position:absolute;left:642px;top:924px;" width="14" height="14" viewBox="0 0 14 14"><rect x="1" y="1" width="12" height="12" fill="#fff" stroke="#000" stroke-width="2"/><path d="M3.5 7L6 10L10.5 3.5" fill="none" stroke="#000" stroke-width="2"/></svg>
<div class="t" style="left:679px;top:923px;">New</div>
<div class="t" style="left:729px;top:923px;width:73px;text-align:right">5,00</div>
<div class="t" style="left:803px;top:923px;width:73.5px;text-align:right">9,50</div>
<div class="t" style="left:877px;top:923px;width:73.5px;text-align:right">2,32</div>
<div class="t" style="left:120px;top:943px;width:50px;text-align:right">5</div>
<div class="t" style="left:176px;top:943px;">Red 1</div>
<svg style="position:absolute;left:591px;top:944px;" width="14" height="14" viewBox="0 0 14 14"><circle cx="7" cy="7" r="5.6" fill="#fff" stroke="#000" stroke-width="1.8"/></svg>
<svg style="position:absolute;left:642px;top:944px;" width="14" height="14" viewBox="0 0 14 14"><rect x="1" y="1" width="12" height="12" fill="#fff" stroke="#000" stroke-width="2"/><path d="M3.5 7L6 10L10.5 3.5" fill="none" stroke="#000" stroke-width="2"/></svg>
<div class="t" style="left:679px;top:943px;">New</div>
<div class="t" style="left:729px;top:943px;width:73px;text-align:right">11,00</div>
<div class="t" style="left:803px;top:943px;width:73.5px;text-align:right">5,00</div>
<div class="t" style="left:877px;top:943px;width:73.5px;text-align:right">3,77</div>
<div class="t" style="left:120px;top:963px;width:50px;text-align:right">6</div>
<div class="t" style="left:176px;top:963px;">ZZ 1</div>
<svg style="position:absolute;left:591px;top:964px;" width="14" height="14" viewBox="0 0 14 14"><circle cx="7" cy="7" r="5.6" fill="#fff" stroke="#000" stroke-width="1.8"/></svg>
<svg style="position:absolute;left:642px;top:964px;" width="14" height="14" viewBox="0 0 14 14"><rect x="1" y="1" width="12" height="12" fill="#fff" stroke="#000" stroke-width="2"/><path d="M3.5 7L6 10L10.5 3.5" fill="none" stroke="#000" stroke-width="2"/></svg>
<div class="t" style="left:679px;top:963px;">New</div>
<div class="t" style="left:729px;top:963px;width:73px;text-align:right">3,00</div>
<div class="t" style="left:803px;top:963px;width:73.5px;text-align:right">0,00</div>
<div class="t" style="left:877px;top:963px;width:73.5px;text-align:right">1,36</div>
<div class="t" style="left:120px;top:983px;width:50px;text-align:right">7</div>
<div class="t" style="left:176px;top:983px;">ZZ 2</div>
<svg style="position:absolute;left:591px;top:984px;" width="14" height="14" viewBox="0 0 14 14"><circle cx="7" cy="7" r="5.6" fill="#fff" stroke="#000" stroke-width="1.8"/></svg>
<svg style="position:absolute;left:642px;top:984px;" width="14" height="14" viewBox="0 0 14 14"><rect x="1" y="1" width="12" height="12" fill="#fff" stroke="#000" stroke-width="2"/><path d="M3.5 7L6 10L10.5 3.5" fill="none" stroke="#000" stroke-width="2"/></svg>
<div class="t" style="left:679px;top:983px;">New</div>
<div class="t" style="left:729px;top:983px;width:73px;text-align:right">3,70</div>
<div class="t" style="left:803px;top:983px;width:73.5px;text-align:right">5,00</div>
<div class="t" style="left:877px;top:983px;width:73.5px;text-align:right">1,67</div>
<div class="t" style="left:120px;top:1003px;width:50px;text-align:right">8</div>
<div class="t" style="left:176px;top:1003px;">ZZ 3</div>
<svg style="position:absolute;left:591px;top:1004px;" width="14" height="14" viewBox="0 0 14 14"><circle cx="7" cy="7" r="5.6" fill="#fff" stroke="#000" stroke-width="1.8"/></svg>
<svg style="position:absolute;left:642px;top:1004px;" width="14" height="14" viewBox="0 0 14 14"><rect x="1" y="1" width="12" height="12" fill="#fff" stroke="#000" stroke-width="2"/><path d="M3.5 7L6 10L10.5 3.5" fill="none" stroke="#000" stroke-width="2"/></svg>
<div class="t" style="left:679px;top:1003px;">New</div>
<div class="t" style="left:729px;top:1003px;width:73px;text-align:right">4,00</div>
<div class="t" style="left:803px;top:1003px;width:73.5px;text-align:right">10,00</div>
<div class="t" style="left:877px;top:1003px;width:73.5px;text-align:right">1,90</div>
<div class="t" style="left:120px;top:1023px;width:50px;text-align:right">9</div>
<div class="t" style="left:176px;top:1023px;">Area 2</div>
<svg style="position:absolute;left:591px;top:1024px;" width="14" height="14" viewBox="0 0 14 14"><circle cx="7" cy="7" r="5.6" fill="#fff" stroke="#000" stroke-width="1.8"/></svg>
<svg style="position:absolute;left:642px;top:1024px;" width="14" height="14" viewBox="0 0 14 14"><rect x="1" y="1" width="12" height="12" fill="#fff" stroke="#000" stroke-width="2"/><path d="M3.5 7L6 10L10.5 3.5" fill="none" stroke="#000" stroke-width="2"/></svg>
<div class="t" style="left:679px;top:1023px;">New</div>
<div class="t" style="left:729px;top:1023px;width:73px;text-align:right">0,00</div>
<div class="t" style="left:803px;top:1023px;width:73.5px;text-align:right">0,00</div>
<div class="t" style="left:877px;top:1023px;width:73.5px;text-align:right">0,00</div>
<svg style="position:absolute;left:1030px;top:886px;" width="12" height="7" viewBox="0 0 12 7"><path d="M0 6.5L5.5 0.5L11 6.5Z" fill="#606060"/></svg>
<div style="position:absolute;left:1026px;top:911px;width:19px;height:99px;background:#cdcdcd"></div>
<svg style="position:absolute;left:1030px;top:1029px;" width="12" height="7" viewBox="0 0 12 7"><path d="M0 0.5L5.5 6.5L11 0.5Z" fill="#606060"/></svg>
<div style="position:absolute;left:1064px;top:840px;width:175px;height:202px;background:#fff;border:1px solid #adadad;box-sizing:border-box"></div>
<div class="t" style="left:1257px;top:842px;width:298px;text-align:center;font-weight:bold;letter-spacing:-0.08px">Generating of interfaces between layers</div>
<div style="position:absolute;left:1257px;top:866px;width:298px;height:176px;border:1px solid #adadad;box-sizing:border-box;background:#f0f0f0"></div>
<div style="position:absolute;left:1258px;top:908px;width:274px;height:132px;background:#fff"></div>
<div style="position:absolute;left:1258px;top:907px;width:275px;height:1px;background:#000"></div>
<div style="position:absolute;left:1532px;top:867px;width:1px;height:173px;background:#000"></div>
<div style="position:absolute;left:1425px;top:867px;width:1px;height:173px;background:#a0a0a0"></div>
<div style="position:absolute;left:1467px;top:867px;width:1px;height:173px;background:#a0a0a0"></div>
<div style="position:absolute;left:1258px;top:927px;width:274px;height:1px;background:#a0a0a0"></div>
<div style="position:absolute;left:1258px;top:947px;width:274px;height:1px;background:#a0a0a0"></div>
<div style="position:absolute;left:1258px;top:967px;width:274px;height:1px;background:#a0a0a0"></div>
<div style="position:absolute;left:1258px;top:987px;width:274px;height:1px;background:#a0a0a0"></div>
<div style="position:absolute;left:1258px;top:1007px;width:274px;height:1px;background:#a0a0a0"></div>
<div style="position:absolute;left:1258px;top:1027px;width:274px;height:1px;background:#a0a0a0"></div>
<div class="t" style="left:1258px;top:870px;width:167px;text-align:center;">Interface</div>
<div class="t" style="left:1258px;top:890px;width:167px;text-align:center;">between layers</div>
<div class="t" style="left:1425px;top:870px;width:42px;text-align:center;">Group</div>
<div class="t" style="left:1425px;top:890px;width:42px;text-align:center;">order</div>
<div class="t" style="left:1467px;top:870px;width:65px;text-align:center;">Smoothing</div>
<div style="position:absolute;left:1257px;top:866px;width:275px;height:174px;overflow:hidden">
<svg style="position:absolute;left:0px;top:0px;" width="275" height="174" viewBox="0 0 275 174"><defs><pattern id="swB" width="5.94" height="17" patternUnits="userSpaceOnUse" patternTransform="rotate(45)"><rect width="5.94" height="17" fill="#80c0e0"/><path d="M3 0V17" stroke="#0070d0" stroke-width=".7"/></pattern><pattern id="swP" width="5.94" height="17" patternUnits="userSpaceOnUse" patternTransform="rotate(45)"><rect width="5.94" height="17" fill="#8080e0"/><path d="M3 0V17" stroke="#0000c0" stroke-width=".7"/></pattern><pattern id="swG" width="5.94" height="17" patternUnits="userSpaceOnUse" patternTransform="rotate(45)"><rect width="5.94" height="17" fill="#80e080"/><path d="M3 0V17" stroke="#00b000" stroke-width=".7"/></pattern><pattern id="swR" width="5.94" height="17" patternUnits="userSpaceOnUse" patternTransform="rotate(45)"><rect width="5.94" height="17" fill="#c0a080"/><path d="M3 0V17" stroke="#604020" stroke-width=".7"/></pattern></defs><rect x="56.5" y="44.5" width="52" height="14" fill="#ffff88" stroke="#000"/><rect x="113.5" y="44.5" width="52" height="14" fill="url(#swB)" stroke="#000"/><rect x="56.5" y="64.5" width="52" height="14" fill="url(#swB)" stroke="#000"/><rect x="113.5" y="64.5" width="52" height="14" fill="url(#swP)" stroke="#000"/><rect x="56.5" y="84.5" width="52" height="14" fill="url(#swP)" stroke="#000"/><rect x="113.5" y="84.5" width="52" height="14" fill="url(#swG)" stroke="#000"/><rect x="56.5" y="104.5" width="52" height="14" fill="url(#swG)" stroke="#000"/><rect x="113.5" y="104.5" width="52" height="14" fill="url(#swR)" stroke="#000"/><rect x="56.5" y="124.5" width="52" height="14" fill="url(#swR)" stroke="#000"/><rect x="113.5" y="124.5" width="52" height="14" fill="#000000" stroke="#000"/><rect x="56.5" y="144.5" width="52" height="14" fill="#000000" stroke="#000"/><rect x="113.5" y="144.5" width="52" height="14" fill="url(#swB)" stroke="#000"/><rect x="56.5" y="164.5" width="52" height="14" fill="url(#swB)" stroke="#000"/><rect x="113.5" y="164.5" width="52" height="14" fill="url(#swP)" stroke="#000"/></svg>
<div class="t" style="left:17px;top:44px;">1 - 2</div>
<div class="t" style="left:168px;top:44px;width:41px;text-align:right">1</div>
<svg style="position:absolute;left:235px;top:45px;" width="14" height="14" viewBox="0 0 14 14"><rect x="1" y="1" width="12" height="12" fill="#fff" stroke="#000" stroke-width="2"/><path d="M3.5 7L6 10L10.5 3.5" fill="none" stroke="#000" stroke-width="2"/></svg>
<div class="t" style="left:17px;top:64px;">2 - 3</div>
<div class="t" style="left:168px;top:64px;width:41px;text-align:right">1</div>
<svg style="position:absolute;left:235px;top:65px;" width="14" height="14" viewBox="0 0 14 14"><rect x="1" y="1" width="12" height="12" fill="#fff" stroke="#000" stroke-width="2"/><path d="M3.5 7L6 10L10.5 3.5" fill="none" stroke="#000" stroke-width="2"/></svg>
<div class="t" style="left:17px;top:84px;">3 - 4</div>
<div class="t" style="left:168px;top:84px;width:41px;text-align:right">1</div>
<svg style="position:absolute;left:235px;top:85px;" width="14" height="14" viewBox="0 0 14 14"><rect x="1" y="1" width="12" height="12" fill="#fff" stroke="#000" stroke-width="2"/><path d="M3.5 7L6 10L10.5 3.5" fill="none" stroke="#000" stroke-width="2"/></svg>
<div class="t" style="left:17px;top:104px;">4 - 5</div>
<div class="t" style="left:168px;top:104px;width:41px;text-align:right">1</div>
<svg style="position:absolute;left:235px;top:105px;" width="14" height="14" viewBox="0 0 14 14"><rect x="1" y="1" width="12" height="12" fill="#fff" stroke="#000" stroke-width="2"/><path d="M3.5 7L6 10L10.5 3.5" fill="none" stroke="#000" stroke-width="2"/></svg>
<div class="t" style="left:17px;top:124px;">5 - 6</div>
<div class="t" style="left:168px;top:124px;width:41px;text-align:right">1</div>
<svg style="position:absolute;left:235px;top:125px;" width="14" height="14" viewBox="0 0 14 14"><rect x="1" y="1" width="12" height="12" fill="#fff" stroke="#000" stroke-width="2"/><path d="M3.5 7L6 10L10.5 3.5" fill="none" stroke="#000" stroke-width="2"/></svg>
<div class="t" style="left:17px;top:144px;">6 - 7</div>
<div class="t" style="left:168px;top:144px;width:41px;text-align:right">1</div>
<svg style="position:absolute;left:235px;top:145px;" width="14" height="14" viewBox="0 0 14 14"><rect x="1" y="1" width="12" height="12" fill="#fff" stroke="#000" stroke-width="2"/><path d="M3.5 7L6 10L10.5 3.5" fill="none" stroke="#000" stroke-width="2"/></svg>
<div class="t" style="left:17px;top:164px;">7 - 8</div>
<div class="t" style="left:168px;top:164px;width:41px;text-align:right">1</div>
<svg style="position:absolute;left:235px;top:165px;" width="14" height="14" viewBox="0 0 14 14"><rect x="1" y="1" width="12" height="12" fill="#fff" stroke="#000" stroke-width="2"/><path d="M3.5 7L6 10L10.5 3.5" fill="none" stroke="#000" stroke-width="2"/></svg>
</div>
<svg style="position:absolute;left:1538px;top:914px;" width="12" height="7" viewBox="0 0 12 7"><path d="M0 6.5L5.5 0.5L11 6.5Z" fill="#606060"/></svg>
<div style="position:absolute;left:1534px;top:926px;width:19px;height:57px;background:#cdcdcd"></div>
<svg style="position:absolute;left:1538px;top:1028px;" width="12" height="7" viewBox="0 0 12 7"><path d="M0 0.5L5.5 6.5L11 0.5Z" fill="#606060"/></svg>
<div style="position:absolute;left:1684px;top:810px;width:92px;height:22px;background:#e1e1e1;border:1px solid #adadad;box-sizing:border-box"></div>
<svg style="position:absolute;left:1688px;top:813px;" width="16" height="16" viewBox="0 0 16 16"><rect x="1.5" y="1.5" width="3" height="13" fill="#00b000" stroke="#000" stroke-width="1.5"/><rect x="11.5" y="1.5" width="3" height="13" fill="#fff" stroke="#000" stroke-width="1.5"/><circle cx="8" cy="9.8" r="4.3" fill="#fff" stroke="#000" stroke-width="1.2"/><path d="M5.6 9.8H9.2M7.9 7.6L10.2 9.8L7.9 12" fill="none" stroke="#0a0" stroke-width="1.7"/></svg>
<div class="t" style="left:1707px;top:813px;">Model again</div>
<div style="position:absolute;left:1783px;top:107px;width:1px;height:947px;background:#000"></div>
<div style="position:absolute;left:1784px;top:107px;width:134px;height:947px;background:#f0f0f0"></div>
<div style="position:absolute;left:1788px;top:111px;width:127px;height:20px;background:#d1d1d1"></div>
<div class="t" style="left:1791px;top:114px;">Frames</div>
<div style="position:absolute;left:1901px;top:123px;width:6px;height:2px;background:#000"></div>
<div style="position:absolute;left:1794px;top:204px;width:115px;height:1px;background:#808080"></div>
<div style="position:absolute;left:1794px;top:233px;width:115px;height:1px;background:#808080"></div>
<div style="position:absolute;left:1794px;top:284px;width:115px;height:1px;background:#808080"></div>
<div style="position:absolute;left:1794px;top:357px;width:115px;height:1px;background:#808080"></div>
<div style="position:absolute;left:1792px;top:361px;width:119px;height:22px;background:#cce4f7;border:1px solid #0055b0;box-sizing:border-box"></div>
<div class="t" style="left:1815px;top:138px;">Project</div>
<div class="t" style="left:1815px;top:160px;">Settings</div>
<div class="t" style="left:1815px;top:182px;">Templates</div>
<div class="t" style="left:1815px;top:211px;">Construction Site</div>
<div class="t" style="left:1815px;top:240px;">Terrain Points</div>
<div class="t" style="left:1815px;top:262px;">Terrain Edges</div>
<div class="t" style="left:1815px;top:291px;">Field Tests</div>
<div class="t" style="left:1815px;top:313px;">Soils</div>
<div class="t" style="left:1815px;top:335px;">Soil Profiles</div>
<div class="t" style="left:1815px;top:364px;">Geological Model</div>
<div class="t" style="left:1815px;top:386px;">Output Profiles</div>
<div class="t" style="left:1815px;top:408px;">Output Sections</div>
<svg style="position:absolute;left:1796px;top:138px;" width="16" height="16" viewBox="0 0 16 16"><rect x="2.5" y="1.5" width="11" height="13" fill="#fff" stroke="#000" stroke-width="1.3"/><path d="M4 3.5H12M4 6.5H12M4 8.5H12M4 10.5H12M4 12.5H12" stroke="#000" stroke-width="1"/></svg>
<svg style="position:absolute;left:1796px;top:160px;" width="16" height="16" viewBox="0 0 16 16"><path d="M7 0.5H9V3L11 3.8L12.8 2L14 3.2L12.2 5L13 7H15.5V9H13L12.2 11L14 12.8L12.8 14L11 12.2L9 13V15.5H7V13L5 12.2L3.2 14L2 12.8L3.8 11L3 9H0.5V7H3L3.8 5L2 3.2L3.2 2L5 3.8L7 3Z" fill="#000"/><circle cx="8" cy="8" r="3.3" fill="#fff"/><circle cx="8" cy="8" r="2.6" fill="#ff0"/></svg>
<svg style="position:absolute;left:1796px;top:182px;" width="16" height="16" viewBox="0 0 16 16"><rect x="2.5" y="0.5" width="11" height="13" fill="#fff" stroke="#000" stroke-width="1.3"/><path d="M4 2.5H9M10 2.5H12M2 3.5H14" stroke="#000" stroke-width="1"/><rect x="4" y="5" width="3" height="7" fill="#000"/><rect x="5" y="6" width="1" height="2" fill="#f00"/><rect x="5" y="8" width="1" height="2" fill="#ee0"/><rect x="5" y="10" width="1" height="1" fill="#0c0"/><path d="M9 5.5H12M9 7.5H12M9 9.5H12M9 11.5H12" stroke="#000"/></svg>
<svg style="position:absolute;left:1796px;top:211px;" width="16" height="16" viewBox="0 0 16 16"><path d="M1.5 1.5H7.5V7.5H13.5V13.5H1.5Z" fill="#c4bc6c" stroke="#000" stroke-width="1.5"/><rect x="3" y="3" width="1" height="1" fill="#000"/><rect x="3" y="11" width="1" height="1" fill="#000"/><rect x="11" y="11" width="1" height="1" fill="#000"/><rect x="6" y="9" width="1" height="1" fill="#000"/></svg>
<svg style="position:absolute;left:1796px;top:240px;" width="16" height="16" viewBox="0 0 16 16"><path d="M1 0.5L14.5 15M14 0.5L1.5 15" stroke="#404040" stroke-width=".7"/><circle cx="8" cy="7.5" r="2.6" fill="#fff" stroke="#000" stroke-width="1.1"/></svg>
<svg style="position:absolute;left:1796px;top:262px;" width="16" height="16" viewBox="0 0 16 16"><path d="M2.5 13.5L13 3" stroke="#f0f" stroke-width="1.8"/><circle cx="2.5" cy="13.5" r="1.8" fill="#fff" stroke="#000" stroke-width="1"/><circle cx="13" cy="3" r="1.8" fill="#fff" stroke="#000" stroke-width="1"/></svg>
<svg style="position:absolute;left:1796px;top:291px;" width="16" height="16" viewBox="0 0 16 16"><path d="M5.5 0.5V15" stroke="#000" stroke-width="1.3"/><path d="M5.5 3L12 14.5H5.5Z" fill="#f0f" stroke="#000" stroke-width=".8"/><path d="M6 9.5H9.5M6 12H11" stroke="#000" stroke-width=".9"/></svg>
<svg style="position:absolute;left:1796px;top:313px;" width="16" height="16" viewBox="0 0 16 16"><rect x="2.5" y="1.5" width="10" height="12" fill="#ff0" stroke="#000" stroke-width="1.3"/><path d="M3 6L7 2M3 10L11 2M4 13L12 5M8 13L12 9" stroke="#000" stroke-width="1"/><path d="M13.5 3V14.5H4" stroke="#606060" stroke-width="1"/></svg>
<svg style="position:absolute;left:1796px;top:335px;" width="16" height="16" viewBox="0 0 16 16"><path d="M0.5 5.5H16" stroke="#8b1a1a" stroke-width="1"/><path d="M1 6.5V13.5H15.5V6.5" fill="none" stroke="#606060" stroke-dasharray="1 1"/><path d="M7.5 3V13" stroke="#f0f" stroke-width="1.3"/><path d="M5 4L7.5 1L10 4Z" fill="#f0f"/></svg>
<svg style="position:absolute;left:1796px;top:364px;" width="16" height="16" viewBox="0 0 16 16"><path d="M1.5 1V12M13.5 1V12" stroke="#000" stroke-width="1.3"/><circle cx="1.5" cy="11" r="1.4" fill="#000"/><circle cx="13.5" cy="11" r="1.4" fill="#000"/><path d="M3.5 3.5L11.5 1.5V10.5H3.5Z" fill="#fff" stroke="#000"/><path d="M4 4.5L11 3V5.5H4Z" fill="#20a8a8"/><rect x="4" y="6" width="7" height="2" fill="#e07010"/><rect x="4" y="8" width="7" height="2" fill="#20c8c8"/></svg>
<svg style="position:absolute;left:1796px;top:386px;" width="16" height="16" viewBox="0 0 16 16"><path d="M0.5 4.5H16" stroke="#8b1a1a" stroke-width="1"/><path d="M1 5.5V13.5H15.5V5.5" fill="none" stroke="#606060" stroke-dasharray="1 1"/><rect x="6.5" y="2" width="3" height="2" fill="#f0f"/><rect x="7" y="4" width="2" height="8" fill="#f0f"/></svg>
<svg style="position:absolute;left:1796px;top:408px;" width="16" height="16" viewBox="0 0 16 16"><path d="M0.5 6.5L8 4.5L15.5 3.5" stroke="#8b1a1a" stroke-width="1.2" fill="none"/><path d="M1 7V12.5H12.5M3.5 7V12M6 6V12M8.5 5.5V12M11 5V12" stroke="#f0f" stroke-width="1.2"/><path d="M1 13.5H15.5V4" fill="none" stroke="#606060" stroke-dasharray="1 1"/></svg>
<div style="position:absolute;left:1792px;top:683px;width:119px;height:160px;background:#c0dcc0"></div>
<div class="t" style="left:1792px;top:702px;width:119px;text-align:center">Geological model</div>
<div class="t" style="left:1792px;top:717px;width:119px;text-align:center">is generated.</div>
<div style="position:absolute;left:1788px;top:847px;width:127px;height:20px;background:#d1d1d1"></div>
<div class="t" style="left:1791px;top:850px;">Outputs</div>
<div style="position:absolute;left:1901px;top:859px;width:6px;height:2px;background:#000"></div>
<div style="position:absolute;left:1792px;top:871px;width:119px;height:22px;background:#e1e1e1;border:1px solid #adadad;box-sizing:border-box"></div>
<svg style="position:absolute;left:1796px;top:874px;" width="16" height="16" viewBox="0 0 16 16"><rect x=".5" y=".5" width="15" height="15" fill="none" stroke="#606060"/><path d="M3.5 3.5H6.5V6.5H8.5V9.5H9.5V12.5H3.5Z" fill="#fff" stroke="#111"/><path d="M3.5 9.5H8.5" stroke="#111"/><path d="M11.5 1V8M8 4.5H15" stroke="#0a0" stroke-width="2"/></svg>
<div class="t" style="left:1815px;top:875px;">Add picture</div>
<div class="t" style="left:1793px;top:899px;">Geological Model :</div>
<div class="t" style="left:1903px;top:899px;">0</div>
<div class="t" style="left:1793px;top:921px;">Total :</div>
<div class="t" style="left:1903px;top:921px;">0</div>
<div style="position:absolute;left:1792px;top:941px;width:119px;height:22px;background:#e1e1e1;border:1px solid #adadad;box-sizing:border-box"></div>
<svg style="position:absolute;left:1796px;top:944px;" width="16" height="16" viewBox="0 0 16 16"><rect x=".5" y=".5" width="15" height="15" fill="none" stroke="#606060"/><path d="M3.5 3.5H6.5V6.5H8.5V9.5H9.5V12.5H3.5Z" fill="#fff" stroke="#111"/><path d="M3.5 9.5H8.5" stroke="#111"/><path d="M8 2.5H9M10 2.5H14M8 4.5H9M10 4.5H14M10 6.5H14" stroke="#111"/></svg>
<div class="t" style="left:1815px;top:945px;">List of pictures</div>
<div style="position:absolute;left:1794px;top:970px;width:115px;height:1px;background:#808080"></div>
<div style="position:absolute;left:1792px;top:978px;width:56px;height:42px;background:#e1e1e1;border:1px solid #adadad;box-sizing:border-box"></div>
<div style="position:absolute;left:1855px;top:978px;width:56px;height:42px;background:#e1e1e1;border:1px solid #adadad;box-sizing:border-box"></div>
<svg style="position:absolute;left:1806px;top:983px;" width="28" height="32" viewBox="0 0 28 32"><rect x="4" y="4" width="2.5" height="5" fill="#c8b488" stroke="#111" stroke-width=".8"/><rect x="21.5" y="4" width="2.5" height="5" fill="#c8b488" stroke="#111" stroke-width=".8"/><rect x="6.5" y="2.5" width="15" height="6.5" rx="1" fill="#fff" stroke="#111" stroke-width="1.2"/><rect x="2.5" y="8.5" width="23" height="12" rx="1.5" fill="#c8b488" stroke="#111" stroke-width="1.3"/><rect x="4" y="10" width="1" height="1" fill="#111"/><rect x="22" y="10" width="2" height="1" fill="#111"/><rect x="5.5" y="13" width="17" height="3.5" fill="#3a3a3a"/><path d="M6.5 14H21.5" stroke="#a0a0a0" stroke-width=".8" stroke-dasharray="1.5 1"/><rect x="6.5" y="16.5" width="15" height="13" rx="1" fill="#fff" stroke="#111" stroke-width="1.2"/><path d="M8.5 19.5H19.5M8.5 21.5H19.5M10.5 23.5H19.5M10.5 25.5H19.5M13 27.5H14M15 27.5H17M18 27.5H19.5" stroke="#111" stroke-width="1"/><rect x="8" y="23" width="1" height="1" fill="#111"/><rect x="8" y="25" width="2" height="1" fill="#111"/></svg>
<svg style="position:absolute;left:1869px;top:983px;" width="28" height="32" viewBox="0 0 28 32"><rect x="4" y="4" width="2.5" height="5" fill="#c8b488" stroke="#111" stroke-width=".8"/><rect x="21.5" y="4" width="2.5" height="5" fill="#c8b488" stroke="#111" stroke-width=".8"/><rect x="6.5" y="2.5" width="15" height="6.5" rx="1" fill="#fff" stroke="#111" stroke-width="1.2"/><rect x="2.5" y="8.5" width="23" height="12" rx="1.5" fill="#c8b488" stroke="#111" stroke-width="1.3"/><rect x="4" y="10" width="1" height="1" fill="#111"/><rect x="22" y="10" width="2" height="1" fill="#111"/><rect x="5.5" y="13" width="17" height="3.5" fill="#3a3a3a"/><path d="M6.5 14H21.5" stroke="#a0a0a0" stroke-width=".8" stroke-dasharray="1.5 1"/><rect x="6.5" y="16.5" width="15" height="13" rx="1" fill="#fff" stroke="#111" stroke-width="1.2"/><path d="M10.5 19.5H9.5V27.5H10.5" fill="none" stroke="#f00" stroke-width="1"/><path d="M12.5 18.5H19.5V20.5H12.5Z M14.5 20.5H19.5V22.5H14.5Z M16.5 22.5H19.5V24.5H16.5Z M17.5 24.5H19.5V26.5H17.5Z" fill="none" stroke="#f00" stroke-width="1"/></svg>
<div style="position:absolute;left:1792px;top:1024px;width:119px;height:22px;background:#e1e1e1;border:1px solid #adadad;box-sizing:border-box"></div>
<svg style="position:absolute;left:1795px;top:1026px;" width="20" height="20" viewBox="0 0 20 20"><rect x="1.5" y="1.5" width="8" height="10" fill="none" stroke="#555"/><path d="M3.5 3.5V9.5H7.5V7.5H5.5V5.5M3.5 3.5H5.5V6" fill="none" stroke="#111"/><path d="M11 5.5H13V9.5" fill="none" stroke="#0a0" stroke-width="1.1"/><path d="M11.5 8.5L13 10.5L14.5 8.5" fill="none" stroke="#0a0" stroke-width="1.1"/><rect x="10.5" y="11.5" width="6" height="5" fill="#fff" stroke="#111"/><path d="M11 13.5H16" stroke="#111"/></svg>
<div class="t" style="left:1815px;top:1028px;">Copy view</div>
<div style="position:absolute;left:1px;top:1054px;width:1917px;height:1px;background:#d9d9d9"></div>
<div style="position:absolute;left:1917px;top:49px;width:1px;height:1030px;background:#fff"></div>
<svg style="position:absolute;left:1909px;top:1069px;" width="9" height="9" viewBox="0 0 9 9"><rect x="6" y="0" width="2" height="2" fill="#a0a0a0"/><rect x="3" y="3" width="2" height="2" fill="#a0a0a0"/><rect x="6" y="3" width="2" height="2" fill="#a0a0a0"/><rect x="0" y="6" width="2" height="2" fill="#a0a0a0"/><rect x="3" y="6" width="2" height="2" fill="#a0a0a0"/><rect x="6" y="6" width="2" height="2" fill="#a0a0a0"/></svg>
</body></html>
